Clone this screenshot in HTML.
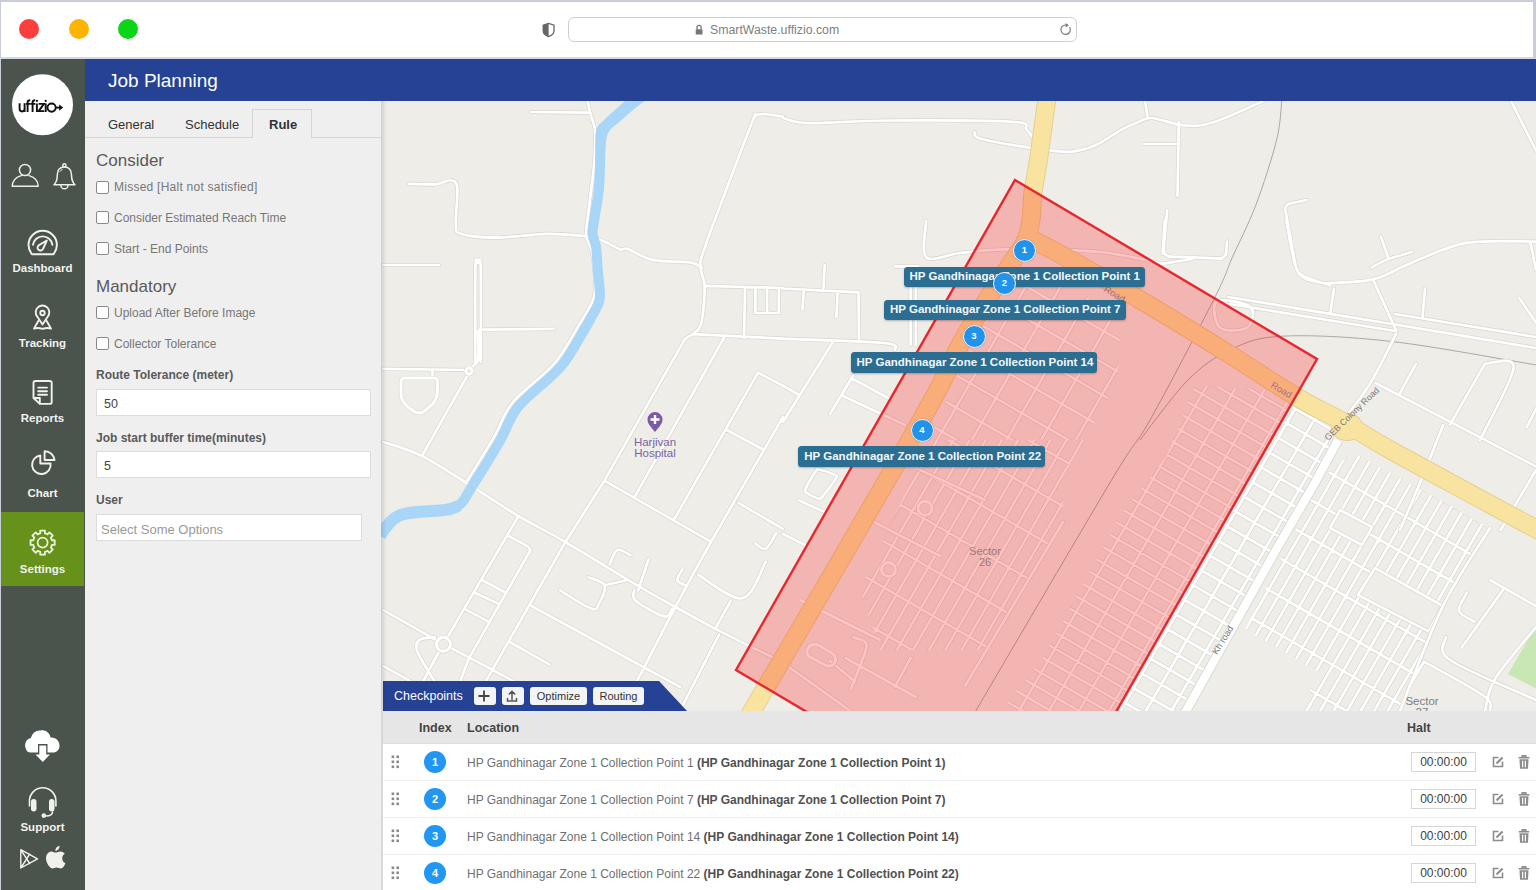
<!DOCTYPE html>
<html><head><meta charset="utf-8">
<style>
*{box-sizing:border-box;margin:0;padding:0}
html,body{width:1536px;height:890px;overflow:hidden;background:#fff;font-family:"Liberation Sans",sans-serif}
.abs{position:absolute}
#chrome{position:absolute;left:0;top:0;width:1536px;height:59px;background:#fff;border-top:2px solid #c9cdd9;border-left:1px solid #c9cdd9;border-right:3px solid #c9cdd9;border-bottom:2px solid #d3d9e6}
.tl{position:absolute;top:19px;width:20px;height:20px;border-radius:50%}
#url{position:absolute;left:568px;top:17px;width:509px;height:25px;border:1px solid #cfcfcf;border-radius:6px;background:#fff}
#urltext{position:absolute;left:710px;top:23px;font-size:12.3px;color:#808080}
#side{position:absolute;left:0;top:59px;width:85px;height:831px;background:#4b534d;border-left:1px solid #c9cdd9}
.nav{position:absolute;left:0;width:85px;text-align:center;color:#f2f2ee;font-size:11.5px;font-weight:bold}
#hdr{position:absolute;left:85px;top:59px;width:1451px;height:42px;background:#254294}
#hdr span{position:absolute;left:23px;top:11px;color:#fff;font-size:19px}
#panel{position:absolute;left:85px;top:101px;width:296px;height:789px;background:#efefef}
.tab{position:absolute;top:16px;font-size:13px;color:#333}
.cb{position:absolute;left:11px;width:13px;height:13px;border:1px solid #8a8a8a;border-radius:2px;background:#fff}
.cbl{position:absolute;left:29px;font-size:12px;color:#777}
.sec{position:absolute;left:11px;font-size:17px;color:#5a5a5a}
.lbl{position:absolute;left:11px;font-size:12px;color:#5a5a5a;font-weight:bold}
.inp{position:absolute;left:11px;width:275px;height:27px;background:#fff;border:1px solid #dcdcdc;font-size:12.5px;color:#444;padding:7px 0 0 7px}
#map{position:absolute;left:381px;top:101px;width:1155px;height:610px;background:#eeede8;overflow:hidden}
.th{position:absolute;top:10px;font-size:12.5px;font-weight:bold;color:#444}
.row{position:absolute;left:0;width:1153px;height:37px;border-bottom:1px solid #f0f0f0}
.num{position:absolute;left:41px;top:7px;width:22px;height:22px;border-radius:50%;background:#2196f3;color:#fff;font-size:11px;font-weight:bold;text-align:center;line-height:22px}
.loc{position:absolute;left:84px;top:12px;font-size:12px;color:#707070;white-space:nowrap}
.loc b{color:#505050}
.halt{position:absolute;left:1028px;top:8px;width:65px;height:20px;border:1px solid #d6d6d6;font-size:12px;color:#404040;text-align:center;line-height:19.5px}
.btn{position:absolute;top:687px;height:18px;background:#f4f4f4;border-radius:3px;overflow:hidden}
.mlb{position:absolute;height:20.7px;background:#2b6e92;border-radius:3.5px;color:#f4f8fb;font-size:11.5px;font-weight:bold;padding:3.8px 0 0 6px;white-space:nowrap;box-shadow:0 1px 2px rgba(0,0,0,0.25)}
.mk{position:absolute;width:23px;height:23px;border-radius:50%;background:#2292ea;border:1.5px solid #fff;color:#fff;font-size:9.5px;font-weight:bold;text-align:center;line-height:20px;box-shadow:0 0 1px rgba(0,0,0,0.3)}
#tbl{position:absolute;left:383px;top:711px;width:1153px;height:179px;background:#fff}
</style></head><body>
<div id="chrome">
</div>
<div class="tl" style="left:19px;background:#fc3f3c"></div>
<div class="tl" style="left:69px;background:#fdb400"></div>
<div class="tl" style="left:118px;background:#0bd615"></div>
<div id="url"></div>
<svg class="abs" style="left:535px;top:15px" width="40" height="30" viewBox="535 15 40 30"><path d="M548.6 23.4 L543.2 25.2 L543.2 31 Q543.2 34.6 548.6 36.6 Q554 34.6 554 31 L554 25.2 Z" fill="none" stroke="#666" stroke-width="1.3"/><path d="M548.6 23.4 L543.2 25.2 L543.2 31 Q543.2 34.6 548.6 36.6 Z" fill="#666"/></svg>
<svg class="abs" style="left:690px;top:20px" width="20" height="20" viewBox="690 20 20 20"><rect x="695.7" y="29.3" width="6.8" height="5.3" rx="0.6" fill="#777"/><path d="M697 29.5 V27.4 A2.1 2.1 0 0 1 701.2 27.4 V29.5" fill="none" stroke="#777" stroke-width="1.3"/></svg>
<svg class="abs" style="left:1055px;top:18px" width="22" height="22" viewBox="1055 18 22 22"><path d="M1069.6 27.2 A4.7 4.7 0 1 1 1066 25" fill="none" stroke="#777" stroke-width="1.2"/><path d="M1065.5 23 L1068.8 25.2 L1065.8 27.5 Z" fill="#777"/></svg>
<div id="urltext">SmartWaste.uffizio.com</div>

<div id="side"></div>
<div class="abs" style="left:1px;top:512px;width:83px;height:74px;background:#66911b"></div>
<svg class="abs" style="left:0;top:0" width="85" height="890" viewBox="0 0 85 890">
<circle cx="42.5" cy="104.7" r="30.5" fill="#fff"/>
<g fill="none" stroke="#efefe9" stroke-width="1.5" stroke-linecap="round" stroke-linejoin="round">
<circle cx="25" cy="170" r="5.6"/>
<path d="M21.2 175.6 C15 177.5 12.3 182 12.3 186.3 L38.2 186.3 C38.2 182 35.5 177.5 29 175.6"/>
<circle cx="64.4" cy="165.4" r="1.6"/>
<path d="M64.4 167 C59 167 57.4 171 57.3 175 C57.2 179 57.3 181.5 54 184.8 L75 184.8 C71.7 181.5 71.6 179 71.5 175 C71.4 171 69.8 167 64.4 167 Z"/>
<path d="M60.8 185.2 A3.6 3.6 0 0 0 68 185.2"/>
<path d="M60 171.5 A5 5 0 0 1 62.2 169.4" stroke-width="1"/>
</g>
<g fill="none" stroke="#f2f2ec" stroke-width="1.9" stroke-linecap="round" stroke-linejoin="round">
<path d="M31.8 254.2 C29.5 251 28.5 248 28.5 245 A14.2 14.2 0 0 1 56.9 245 C56.9 248 55.9 251 53.6 254.2 Z"/>
<path d="M33 244.8 A9.8 9.8 0 0 1 52.4 244.8"/>
<path d="M46.8 240.5 L43.2 248.5 A2.9 2.9 0 1 1 38.6 245.4 Z"/>
<path d="M42.5 324.6 L37.2 316.6 A6.8 6.8 0 1 1 47.8 316.6 Z"/>
<circle cx="42.5" cy="313" r="2.2"/>
<path d="M38.3 321 L34 328.6 C37 327.5 39.5 327.8 42.5 328.9 C45.5 327.8 48 327.5 51 328.6 L46.7 321"/>
<path d="M33.5 398 L33.5 383 A2 2 0 0 1 35.5 381 L49.7 381 A2 2 0 0 1 51.7 383 L51.7 401.9 A2 2 0 0 1 49.7 403.9 L39.8 403.9 Z M33.5 398 L39.8 398 L39.8 403.9"/>
<path d="M38.2 387.6 L47 387.6 M38.2 391.2 L47 391.2 M38.2 394.7 L47 394.7"/>
<path d="M40.3 455.5 A9.3 9.3 0 1 0 50.6 463.5 L40.3 463.5 Z"/>
<path d="M44.6 451.2 L44.6 460 L54.6 460 A10 10 0 0 0 44.6 451.2 Z"/>
</g>
<g fill="none" stroke="#eef5dc" stroke-width="1.8" stroke-linejoin="round">
<path d="M51.71 539.59 L51.91 540.28 L54.67 540.25 L54.67 544.95 L51.91 544.92 L51.18 546.91 L50.83 547.54 L52.80 549.48 L49.48 552.80 L47.54 550.83 L45.61 551.71 L44.92 551.91 L44.95 554.67 L40.25 554.67 L40.28 551.91 L38.29 551.18 L37.66 550.83 L35.72 552.80 L32.40 549.48 L34.37 547.54 L33.49 545.61 L33.29 544.92 L30.53 544.95 L30.53 540.25 L33.29 540.28 L34.02 538.29 L34.37 537.66 L32.40 535.72 L35.72 532.40 L37.66 534.37 L39.59 533.49 L40.28 533.29 L40.25 530.53 L44.95 530.53 L44.92 533.29 L46.91 534.02 L47.54 534.37 L49.48 532.40 L52.80 535.72 L50.83 537.66 Z"/>
<circle cx="42.6" cy="542.6" r="5"/>
</g>
<path fill="#fff" d="M26 749 C24 745 25.5 739 31 738 C32 733 36 730 40.5 730.5 C45 729 50 733 50.5 737.5 C56 737 60 741.5 59.5 746 C59.5 750 56.5 752.5 53 752.5 L47.5 752.5 L47.5 744 L38 744 L38 752.5 L30.5 752.5 C28 752.5 26.5 751 26 749 Z"/>
<path fill="#fff" d="M39.3 745.4 L46.2 745.4 L46.2 754.5 L50 754.5 L42.75 762 L35.5 754.5 L39.3 754.5 Z"/>
<g fill="none" stroke="#f2f2ec" stroke-width="1.6" stroke-linecap="round">
<path d="M29.5 806 L29.5 801 A13.2 13.2 0 0 1 55.9 801 L55.9 806"/>
<path d="M52.5 812 C52.5 815 50 816 45.5 816"/>
</g>
<rect x="31" y="799" width="5.5" height="12.5" rx="2.7" fill="#f2f2ec"/>
<rect x="49" y="799" width="5.5" height="12.5" rx="2.7" fill="#f2f2ec"/>
<circle cx="43.8" cy="815.6" r="2.3" fill="#f2f2ec"/>
<g fill="none" stroke="#f2f2ec" stroke-width="1.4" stroke-linejoin="round">
<path d="M20.8 849.6 L37.5 858.8 L20.8 868 Z M20.8 849.6 L30 864 M20.8 868 L30 853.6"/>
</g>
<path fill="#f2f2ec" d="M55 852.6 C57.5 852.6 58.5 851.4 60.5 851.4 C62.5 851.4 64 852.6 64.8 853.8 C62.6 855.2 62 857 62.3 859 C62.6 861.2 63.8 862.6 65.3 863.2 C64.6 865.5 62.8 868.4 60.8 868.4 C59 868.4 58.6 867.5 56.6 867.5 C54.6 867.5 54 868.5 52.4 868.5 C50 868.5 46 863 46 858.2 C46 854.6 48.5 851.5 51.5 851.5 C53 851.5 54 852.6 55 852.6 Z M55.3 851 C55.2 848.6 57 846.2 59.5 845.8 C59.8 848.2 57.8 850.8 55.3 851 Z"/>
</svg>
<div class="nav" style="top:262px">Dashboard</div>
<div class="nav" style="top:337px">Tracking</div>
<div class="nav" style="top:412px">Reports</div>
<div class="nav" style="top:487px">Chart</div>
<div class="nav" style="top:563px">Settings</div>
<div class="nav" style="top:821px">Support</div>
<svg class="abs" style="left:0;top:90px" width="85" height="30" viewBox="0 90 85 30"><g fill="none" stroke="#111" stroke-width="1.9" stroke-linecap="butt">
<path d="M19.6 103.3 V108.6 Q19.6 111.5 22.1 111.5 Q24.6 111.5 24.6 108.6 M24.6 103.3 V111.9"/>
<path d="M27.6 111.9 V102.6 Q27.6 100.3 30.2 100.3 M25.9 103.9 H30.6"/>
<path d="M32.6 111.9 V102.6 Q32.6 100.3 35.2 100.3 M30.6 103.9 H35.4"/>
<path d="M36.9 103.5 V111.9 M45.7 103.5 V111.9"/>
<path d="M38.6 103.9 H44 L38.6 111.1 H44.3"/>
<circle cx="51.6" cy="107.6" r="4.1"/>
<path d="M55.7 107.6 H60.5"/>
</g><circle cx="36.9" cy="100.9" r="1.05" fill="#111"/><circle cx="45.7" cy="100.9" r="1.05" fill="#111"/><path d="M59.2 104.4 L63.2 107.6 L59.2 110.8 Z" fill="#111"/></svg>
<div id="hdr"><span>Job Planning</span></div>
<div id="panel">
<div class="abs" style="left:0;top:36px;width:296px;height:1px;background:#d6d6d6"></div>
<div class="abs" style="left:167px;top:8px;width:60px;height:29px;background:#efefef;border:1px solid #d6d6d6;border-bottom:none"></div>
<div class="tab" style="left:23px;top:16px">General</div>
<div class="tab" style="left:100px;top:16px">Schedule</div>
<div class="tab" style="left:184px;top:16px;font-weight:bold;color:#333">Rule</div>
<div class="sec" style="top:50px">Consider</div>
<div class="cb" style="top:80px"></div><div class="cbl" style="top:79px;letter-spacing:0.25px">Missed [Halt not satisfied]</div>
<div class="cb" style="top:110px"></div><div class="cbl" style="top:110px">Consider Estimated Reach Time</div>
<div class="cb" style="top:141px"></div><div class="cbl" style="top:141px">Start - End Points</div>
<div class="sec" style="top:176px">Mandatory</div>
<div class="cb" style="top:205px"></div><div class="cbl" style="top:205px">Upload After Before Image</div>
<div class="cb" style="top:236px"></div><div class="cbl" style="top:236px">Collector Tolerance</div>
<div class="lbl" style="top:267px">Route Tolerance (meter)</div>
<div class="inp" style="top:288px">50</div>
<div class="lbl" style="top:330px">Job start buffer time(minutes)</div>
<div class="inp" style="top:350px">5</div>
<div class="lbl" style="top:392px">User</div>
<div class="inp" style="top:413px;width:266px;color:#999;font-size:13px;padding-left:4px">Select Some Options</div>
</div>
<div id="map"><svg class="abs" style="left:0;top:0" width="1155" height="610" viewBox="381 101 1155 610">
<defs>
<clipPath id="gc0"><path d="M1322.0 478.0 L1353.0 452.0 L1490.0 528.0 L1443.0 606.0 L1400.0 711.0 L1302.0 711.0 L1318.0 672.0 L1245.0 629.0 Z"/></clipPath>
<clipPath id="gc1"><path d="M1195.0 385.0 L1298.0 392.0 L1118.0 711.0 L1000.0 711.0 L1043.0 658.0 L1122.0 512.0 L1166.0 457.0 Z"/></clipPath>
<clipPath id="gc2"><path d="M1298.0 398.0 L1345.0 432.0 L1186.0 711.0 L1118.0 711.0 Z"/></clipPath>
<clipPath id="gc3"><path d="M997.0 300.0 L1060.0 268.0 L1120.0 330.0 L1118.0 380.0 L1085.0 440.0 L930.0 440.0 L955.0 380.0 Z"/></clipPath>
<clipPath id="gc4"><path d="M930.0 440.0 L1085.0 440.0 L1063.0 477.0 L1063.0 520.0 L990.0 650.0 L880.0 650.0 L860.0 590.0 Z"/></clipPath>
<clipPath id="polyc"><path d="M1015 180 L1317 359 L1038 849 L736 670 Z"/></clipPath>
</defs>
<rect x="381" y="101" width="1155" height="610" fill="#eeede8"/>
<path d="M1508 674 L1533 631 L1537 631 L1537 689 Z" fill="#c9e7b4"/>
<g clip-path="url(#gc0)"><path d="M1906.5 444.1 L1518.0 1117.0 M1896.4 438.2 L1507.9 1111.1 M1886.2 432.4 L1497.7 1105.3 M1876.1 426.5 L1487.6 1099.4 M1866.0 420.7 L1477.5 1093.6 M1855.8 414.8 L1467.3 1087.7 M1845.7 409.0 L1457.2 1081.9 M1835.6 403.1 L1447.1 1076.0 M1825.4 397.3 L1436.9 1070.2 M1815.3 391.4 L1426.8 1064.3 M1805.2 385.6 L1416.7 1058.5 M1795.0 379.7 L1406.5 1052.6 M1784.9 373.9 L1396.4 1046.8 M1774.8 368.0 L1386.3 1040.9 M1764.6 362.2 L1376.1 1035.1 M1754.5 356.3 L1366.0 1029.2 M1744.4 350.5 L1355.9 1023.4 M1734.2 344.6 L1345.7 1017.5 M1724.1 338.8 L1335.6 1011.7 M1714.0 332.9 L1325.5 1005.8 M1703.8 327.1 L1315.3 1000.0 M1693.7 321.2 L1305.2 994.1 M1683.6 315.4 L1295.1 988.3 M1673.4 309.5 L1284.9 982.4 M1663.3 303.7 L1274.8 976.6 M1653.2 297.8 L1264.7 970.7 M1643.1 292.0 L1254.6 964.9 M1632.9 286.1 L1244.4 959.0 M1622.8 280.3 L1234.3 953.2 M1612.7 274.4 L1224.2 947.3 M1602.5 268.6 L1214.0 941.5 M1592.4 262.7 L1203.9 935.6 M1582.3 256.9 L1193.8 929.8 M1572.1 251.0 L1183.6 923.9 M1562.0 245.2 L1173.5 918.1 M1551.9 239.3 L1163.4 912.2 M1541.7 233.5 L1153.2 906.4 M1531.6 227.6 L1143.1 900.5 M1521.5 221.8 L1133.0 894.7 M1511.3 215.9 L1122.8 888.8 M1501.2 210.1 L1112.7 883.0 M1491.1 204.2 L1102.6 877.1 M1480.9 198.4 L1092.4 871.3 M1470.8 192.5 L1082.3 865.4 M1460.7 186.7 L1072.2 859.6 M1450.5 180.8 L1062.0 853.7 M1440.4 175.0 L1051.9 847.9 M1430.3 169.1 L1041.8 842.0 M1420.1 163.3 L1031.6 836.2 M1410.0 157.4 L1021.5 830.3 M1399.9 151.6 L1011.4 824.5 M1389.7 145.7 L1001.2 818.6 M1379.6 139.9 L991.1 812.8 M1369.5 134.0 L981.0 806.9 M1359.3 128.2 L970.8 801.1 M1349.2 122.3 L960.7 795.2 M1339.1 116.5 L950.6 789.4 M1329.0 110.6 L940.5 783.5 M1318.8 104.8 L930.3 777.7 M1308.7 98.9 L920.2 771.8 M1298.6 93.1 L910.1 766.0 M1288.4 87.2 L899.9 760.1 M1278.3 81.4 L889.8 754.3 M1268.2 75.5 L879.7 748.4 M1258.0 69.7 L869.5 742.6 M1247.9 63.8 L859.4 736.7 M1237.8 58.0 L849.3 730.9 M1227.6 52.1 L839.1 725.0 M1217.5 46.3 L829.0 719.2 M1233.7 36.2 L1906.6 424.7 M1217.2 64.8 L1890.1 453.3 M1200.7 93.4 L1873.6 481.9 M1184.2 121.9 L1857.1 510.4 M1167.7 150.5 L1840.6 539.0 M1151.2 179.1 L1824.1 567.6 M1134.7 207.7 L1807.6 596.2 M1118.2 236.2 L1791.1 624.7 M1101.7 264.8 L1774.6 653.3 M1085.2 293.4 L1758.1 681.9 M1068.7 322.0 L1741.6 710.5 M1052.2 350.6 L1725.1 739.1 M1035.7 379.1 L1708.6 767.6 M1019.2 407.7 L1692.1 796.2 M1002.7 436.3 L1675.6 824.8 M986.2 464.9 L1659.1 853.4 M969.7 493.4 L1642.6 881.9 M953.2 522.0 L1626.1 910.5 M936.7 550.6 L1609.6 939.1 M920.2 579.2 L1593.1 967.7 M903.7 607.8 L1576.6 996.3 M887.2 636.3 L1560.1 1024.8 M870.7 664.9 L1543.6 1053.4 M854.2 693.5 L1527.1 1082.0 M837.7 722.1 L1510.6 1110.6 M821.2 750.7 L1494.1 1139.2" stroke="#d8d7d2" stroke-width="4.1" fill="none"/><path d="M1906.5 444.1 L1518.0 1117.0 M1896.4 438.2 L1507.9 1111.1 M1886.2 432.4 L1497.7 1105.3 M1876.1 426.5 L1487.6 1099.4 M1866.0 420.7 L1477.5 1093.6 M1855.8 414.8 L1467.3 1087.7 M1845.7 409.0 L1457.2 1081.9 M1835.6 403.1 L1447.1 1076.0 M1825.4 397.3 L1436.9 1070.2 M1815.3 391.4 L1426.8 1064.3 M1805.2 385.6 L1416.7 1058.5 M1795.0 379.7 L1406.5 1052.6 M1784.9 373.9 L1396.4 1046.8 M1774.8 368.0 L1386.3 1040.9 M1764.6 362.2 L1376.1 1035.1 M1754.5 356.3 L1366.0 1029.2 M1744.4 350.5 L1355.9 1023.4 M1734.2 344.6 L1345.7 1017.5 M1724.1 338.8 L1335.6 1011.7 M1714.0 332.9 L1325.5 1005.8 M1703.8 327.1 L1315.3 1000.0 M1693.7 321.2 L1305.2 994.1 M1683.6 315.4 L1295.1 988.3 M1673.4 309.5 L1284.9 982.4 M1663.3 303.7 L1274.8 976.6 M1653.2 297.8 L1264.7 970.7 M1643.1 292.0 L1254.6 964.9 M1632.9 286.1 L1244.4 959.0 M1622.8 280.3 L1234.3 953.2 M1612.7 274.4 L1224.2 947.3 M1602.5 268.6 L1214.0 941.5 M1592.4 262.7 L1203.9 935.6 M1582.3 256.9 L1193.8 929.8 M1572.1 251.0 L1183.6 923.9 M1562.0 245.2 L1173.5 918.1 M1551.9 239.3 L1163.4 912.2 M1541.7 233.5 L1153.2 906.4 M1531.6 227.6 L1143.1 900.5 M1521.5 221.8 L1133.0 894.7 M1511.3 215.9 L1122.8 888.8 M1501.2 210.1 L1112.7 883.0 M1491.1 204.2 L1102.6 877.1 M1480.9 198.4 L1092.4 871.3 M1470.8 192.5 L1082.3 865.4 M1460.7 186.7 L1072.2 859.6 M1450.5 180.8 L1062.0 853.7 M1440.4 175.0 L1051.9 847.9 M1430.3 169.1 L1041.8 842.0 M1420.1 163.3 L1031.6 836.2 M1410.0 157.4 L1021.5 830.3 M1399.9 151.6 L1011.4 824.5 M1389.7 145.7 L1001.2 818.6 M1379.6 139.9 L991.1 812.8 M1369.5 134.0 L981.0 806.9 M1359.3 128.2 L970.8 801.1 M1349.2 122.3 L960.7 795.2 M1339.1 116.5 L950.6 789.4 M1329.0 110.6 L940.5 783.5 M1318.8 104.8 L930.3 777.7 M1308.7 98.9 L920.2 771.8 M1298.6 93.1 L910.1 766.0 M1288.4 87.2 L899.9 760.1 M1278.3 81.4 L889.8 754.3 M1268.2 75.5 L879.7 748.4 M1258.0 69.7 L869.5 742.6 M1247.9 63.8 L859.4 736.7 M1237.8 58.0 L849.3 730.9 M1227.6 52.1 L839.1 725.0 M1217.5 46.3 L829.0 719.2 M1233.7 36.2 L1906.6 424.7 M1217.2 64.8 L1890.1 453.3 M1200.7 93.4 L1873.6 481.9 M1184.2 121.9 L1857.1 510.4 M1167.7 150.5 L1840.6 539.0 M1151.2 179.1 L1824.1 567.6 M1134.7 207.7 L1807.6 596.2 M1118.2 236.2 L1791.1 624.7 M1101.7 264.8 L1774.6 653.3 M1085.2 293.4 L1758.1 681.9 M1068.7 322.0 L1741.6 710.5 M1052.2 350.6 L1725.1 739.1 M1035.7 379.1 L1708.6 767.6 M1019.2 407.7 L1692.1 796.2 M1002.7 436.3 L1675.6 824.8 M986.2 464.9 L1659.1 853.4 M969.7 493.4 L1642.6 881.9 M953.2 522.0 L1626.1 910.5 M936.7 550.6 L1609.6 939.1 M920.2 579.2 L1593.1 967.7 M903.7 607.8 L1576.6 996.3 M887.2 636.3 L1560.1 1024.8 M870.7 664.9 L1543.6 1053.4 M854.2 693.5 L1527.1 1082.0 M837.7 722.1 L1510.6 1110.6 M821.2 750.7 L1494.1 1139.2" stroke="#fff" stroke-width="2.7" fill="none"/></g>
<g clip-path="url(#gc1)"><path d="M973.5 -125.9 L1820.4 363.1 M966.5 -113.8 L1813.4 375.2 M959.5 -101.7 L1806.4 387.3 M952.5 -89.6 L1799.4 399.4 M945.5 -77.4 L1792.4 411.6 M938.5 -65.3 L1785.4 423.7 M931.5 -53.2 L1778.4 435.8 M924.5 -41.1 L1771.4 447.9 M917.5 -28.9 L1764.4 460.1 M910.5 -16.8 L1757.4 472.2 M903.5 -4.7 L1750.4 484.3 M896.5 7.4 L1743.4 496.4 M889.5 19.6 L1736.4 508.6 M882.5 31.7 L1729.4 520.7 M875.5 43.8 L1722.4 532.8 M868.5 55.9 L1715.4 544.9 M861.5 68.1 L1708.4 557.1 M854.5 80.2 L1701.4 569.2 M847.5 92.3 L1694.4 581.3 M840.5 104.4 L1687.4 593.4 M833.5 116.6 L1680.4 605.6 M826.5 128.7 L1673.4 617.7 M819.5 140.8 L1666.4 629.8 M812.5 152.9 L1659.4 641.9 M805.5 165.1 L1652.4 654.1 M798.5 177.2 L1645.4 666.2 M791.5 189.3 L1638.4 678.3 M784.5 201.4 L1631.4 690.4 M777.5 213.5 L1624.4 702.5 M770.5 225.7 L1617.4 714.7 M763.5 237.8 L1610.4 726.8 M756.5 249.9 L1603.4 738.9 M749.5 262.0 L1596.4 751.0 M742.5 274.2 L1589.4 763.2 M735.5 286.3 L1582.4 775.3 M728.5 298.4 L1575.4 787.4 M721.5 310.5 L1568.4 799.5 M714.5 322.7 L1561.4 811.7 M707.5 334.8 L1554.4 823.8 M700.5 346.9 L1547.4 835.9 M693.5 359.0 L1540.4 848.0 M686.5 371.2 L1533.4 860.2 M679.5 383.3 L1526.4 872.3 M672.5 395.4 L1519.4 884.4 M665.5 407.5 L1512.4 896.5 M658.5 419.7 L1505.4 908.7 M651.5 431.8 L1498.4 920.8 M644.5 443.9 L1491.4 932.9 M637.5 456.0 L1484.4 945.0 M630.5 468.2 L1477.4 957.2 M623.5 480.3 L1470.4 969.3 M616.5 492.4 L1463.4 981.4 M609.5 504.5 L1456.4 993.5 M602.5 516.6 L1449.4 1005.6 M595.5 528.8 L1442.4 1017.8 M588.5 540.9 L1435.4 1029.9 M581.5 553.0 L1428.4 1042.0 M574.5 565.1 L1421.4 1054.1 M567.5 577.3 L1414.4 1066.3 M560.5 589.4 L1407.4 1078.4 M553.5 601.5 L1400.4 1090.5 M546.5 613.6 L1393.4 1102.6 M539.5 625.8 L1386.4 1114.8 M532.5 637.9 L1379.4 1126.9 M525.5 650.0 L1372.4 1139.0 M518.5 662.1 L1365.4 1151.1 M511.5 674.3 L1358.4 1163.3 M504.5 686.4 L1351.4 1175.4 M497.5 698.5 L1344.4 1187.5 M490.5 710.6 L1337.4 1199.6 M483.5 722.8 L1330.4 1211.8 M476.5 734.9 L1323.4 1223.9 M1839.4 382.0 L1350.4 1228.9 M1816.9 369.0 L1327.9 1215.9 M1794.4 356.0 L1305.4 1202.9 M1771.9 343.0 L1282.9 1189.9 M1749.3 330.0 L1260.3 1176.9 M1726.8 317.0 L1237.8 1163.9 M1704.3 304.0 L1215.3 1150.9 M1681.8 291.0 L1192.8 1137.9 M1659.3 278.0 L1170.3 1124.9 M1636.8 265.0 L1147.8 1111.9 M1614.2 252.0 L1125.2 1098.9 M1591.7 239.0 L1102.7 1085.9 M1569.2 226.0 L1080.2 1072.9 M1546.7 213.0 L1057.7 1059.9 M1524.2 200.0 L1035.2 1046.9 M1501.7 187.0 L1012.7 1033.9 M1479.1 174.0 L990.1 1020.9 M1456.6 161.0 L967.6 1007.9 M1434.1 148.0 L945.1 994.9 M1411.6 135.0 L922.6 981.9 M1389.1 122.0 L900.1 968.9 M1366.6 109.0 L877.6 955.9 M1344.1 96.0 L855.1 942.9 M1321.5 83.0 L832.5 929.9 M1299.0 70.0 L810.0 916.9 M1276.5 57.0 L787.5 903.9 M1254.0 44.0 L765.0 890.9 M1231.5 31.0 L742.5 877.9 M1209.0 18.0 L720.0 864.9 M1186.4 5.0 L697.4 851.9 M1163.9 -8.0 L674.9 838.9 M1141.4 -21.0 L652.4 825.9 M1118.9 -34.0 L629.9 812.9 M1096.4 -47.0 L607.4 799.9 M1073.9 -60.0 L584.9 786.9 M1051.3 -73.0 L562.3 773.9 M1028.8 -86.0 L539.8 760.9 M1006.3 -99.0 L517.3 747.9 M983.8 -112.0 L494.8 734.9 M961.3 -125.0 L472.3 721.9" stroke="#d8d7d2" stroke-width="3.9" fill="none"/><path d="M973.5 -125.9 L1820.4 363.1 M966.5 -113.8 L1813.4 375.2 M959.5 -101.7 L1806.4 387.3 M952.5 -89.6 L1799.4 399.4 M945.5 -77.4 L1792.4 411.6 M938.5 -65.3 L1785.4 423.7 M931.5 -53.2 L1778.4 435.8 M924.5 -41.1 L1771.4 447.9 M917.5 -28.9 L1764.4 460.1 M910.5 -16.8 L1757.4 472.2 M903.5 -4.7 L1750.4 484.3 M896.5 7.4 L1743.4 496.4 M889.5 19.6 L1736.4 508.6 M882.5 31.7 L1729.4 520.7 M875.5 43.8 L1722.4 532.8 M868.5 55.9 L1715.4 544.9 M861.5 68.1 L1708.4 557.1 M854.5 80.2 L1701.4 569.2 M847.5 92.3 L1694.4 581.3 M840.5 104.4 L1687.4 593.4 M833.5 116.6 L1680.4 605.6 M826.5 128.7 L1673.4 617.7 M819.5 140.8 L1666.4 629.8 M812.5 152.9 L1659.4 641.9 M805.5 165.1 L1652.4 654.1 M798.5 177.2 L1645.4 666.2 M791.5 189.3 L1638.4 678.3 M784.5 201.4 L1631.4 690.4 M777.5 213.5 L1624.4 702.5 M770.5 225.7 L1617.4 714.7 M763.5 237.8 L1610.4 726.8 M756.5 249.9 L1603.4 738.9 M749.5 262.0 L1596.4 751.0 M742.5 274.2 L1589.4 763.2 M735.5 286.3 L1582.4 775.3 M728.5 298.4 L1575.4 787.4 M721.5 310.5 L1568.4 799.5 M714.5 322.7 L1561.4 811.7 M707.5 334.8 L1554.4 823.8 M700.5 346.9 L1547.4 835.9 M693.5 359.0 L1540.4 848.0 M686.5 371.2 L1533.4 860.2 M679.5 383.3 L1526.4 872.3 M672.5 395.4 L1519.4 884.4 M665.5 407.5 L1512.4 896.5 M658.5 419.7 L1505.4 908.7 M651.5 431.8 L1498.4 920.8 M644.5 443.9 L1491.4 932.9 M637.5 456.0 L1484.4 945.0 M630.5 468.2 L1477.4 957.2 M623.5 480.3 L1470.4 969.3 M616.5 492.4 L1463.4 981.4 M609.5 504.5 L1456.4 993.5 M602.5 516.6 L1449.4 1005.6 M595.5 528.8 L1442.4 1017.8 M588.5 540.9 L1435.4 1029.9 M581.5 553.0 L1428.4 1042.0 M574.5 565.1 L1421.4 1054.1 M567.5 577.3 L1414.4 1066.3 M560.5 589.4 L1407.4 1078.4 M553.5 601.5 L1400.4 1090.5 M546.5 613.6 L1393.4 1102.6 M539.5 625.8 L1386.4 1114.8 M532.5 637.9 L1379.4 1126.9 M525.5 650.0 L1372.4 1139.0 M518.5 662.1 L1365.4 1151.1 M511.5 674.3 L1358.4 1163.3 M504.5 686.4 L1351.4 1175.4 M497.5 698.5 L1344.4 1187.5 M490.5 710.6 L1337.4 1199.6 M483.5 722.8 L1330.4 1211.8 M476.5 734.9 L1323.4 1223.9 M1839.4 382.0 L1350.4 1228.9 M1816.9 369.0 L1327.9 1215.9 M1794.4 356.0 L1305.4 1202.9 M1771.9 343.0 L1282.9 1189.9 M1749.3 330.0 L1260.3 1176.9 M1726.8 317.0 L1237.8 1163.9 M1704.3 304.0 L1215.3 1150.9 M1681.8 291.0 L1192.8 1137.9 M1659.3 278.0 L1170.3 1124.9 M1636.8 265.0 L1147.8 1111.9 M1614.2 252.0 L1125.2 1098.9 M1591.7 239.0 L1102.7 1085.9 M1569.2 226.0 L1080.2 1072.9 M1546.7 213.0 L1057.7 1059.9 M1524.2 200.0 L1035.2 1046.9 M1501.7 187.0 L1012.7 1033.9 M1479.1 174.0 L990.1 1020.9 M1456.6 161.0 L967.6 1007.9 M1434.1 148.0 L945.1 994.9 M1411.6 135.0 L922.6 981.9 M1389.1 122.0 L900.1 968.9 M1366.6 109.0 L877.6 955.9 M1344.1 96.0 L855.1 942.9 M1321.5 83.0 L832.5 929.9 M1299.0 70.0 L810.0 916.9 M1276.5 57.0 L787.5 903.9 M1254.0 44.0 L765.0 890.9 M1231.5 31.0 L742.5 877.9 M1209.0 18.0 L720.0 864.9 M1186.4 5.0 L697.4 851.9 M1163.9 -8.0 L674.9 838.9 M1141.4 -21.0 L652.4 825.9 M1118.9 -34.0 L629.9 812.9 M1096.4 -47.0 L607.4 799.9 M1073.9 -60.0 L584.9 786.9 M1051.3 -73.0 L562.3 773.9 M1028.8 -86.0 L539.8 760.9 M1006.3 -99.0 L517.3 747.9 M983.8 -112.0 L494.8 734.9 M961.3 -125.0 L472.3 721.9" stroke="#fff" stroke-width="2.5" fill="none"/></g>
<g clip-path="url(#gc2)"><path d="M1065.5 -97.0 L1878.7 372.5 M1057.0 -82.3 L1870.2 387.2 M1048.5 -67.6 L1861.7 401.9 M1040.0 -52.8 L1853.2 416.7 M1031.5 -38.1 L1844.7 431.4 M1023.0 -23.4 L1836.2 446.1 M1014.5 -8.7 L1827.7 460.8 M1006.0 6.0 L1819.2 475.5 M997.5 20.8 L1810.7 490.3 M989.0 35.5 L1802.2 505.0 M980.5 50.2 L1793.7 519.7 M972.0 64.9 L1785.2 534.4 M963.5 79.7 L1776.7 549.2 M955.0 94.4 L1768.2 563.9 M946.5 109.1 L1759.7 578.6 M938.0 123.8 L1751.2 593.3 M929.5 138.5 L1742.7 608.0 M921.0 153.3 L1734.2 622.8 M912.5 168.0 L1725.7 637.5 M904.0 182.7 L1717.2 652.2 M895.5 197.4 L1708.7 666.9 M887.0 212.1 L1700.2 681.6 M878.5 226.9 L1691.7 696.4 M870.0 241.6 L1683.2 711.1 M861.5 256.3 L1674.7 725.8 M853.0 271.0 L1666.2 740.5 M844.5 285.8 L1657.7 755.3 M836.0 300.5 L1649.2 770.0 M827.5 315.2 L1640.7 784.7 M819.0 329.9 L1632.2 799.4 M810.5 344.6 L1623.7 814.1 M802.0 359.4 L1615.2 828.9 M793.5 374.1 L1606.7 843.6 M785.0 388.8 L1598.2 858.3 M776.5 403.5 L1589.7 873.0 M768.0 418.3 L1581.2 887.8 M759.5 433.0 L1572.7 902.5 M751.0 447.7 L1564.2 917.2 M742.5 462.4 L1555.7 931.9 M734.0 477.1 L1547.2 946.6 M725.5 491.9 L1538.7 961.4 M717.0 506.6 L1530.2 976.1 M708.5 521.3 L1521.7 990.8 M700.0 536.0 L1513.2 1005.5 M691.5 550.8 L1504.7 1020.3 M683.0 565.5 L1496.2 1035.0 M674.5 580.2 L1487.7 1049.7 M666.0 594.9 L1479.2 1064.4 M657.5 609.6 L1470.7 1079.1 M649.0 624.4 L1462.2 1093.9 M640.5 639.1 L1453.7 1108.6 M632.0 653.8 L1445.2 1123.3 M623.5 668.5 L1436.7 1138.0 M615.0 683.3 L1428.2 1152.8 M606.5 698.0 L1419.7 1167.5 M598.0 712.7 L1411.2 1182.2 M589.5 727.4 L1402.7 1196.9 M1889.0 392.0 L1419.5 1205.2 M1870.0 381.0 L1400.5 1194.2 M1850.9 370.0 L1381.4 1183.2 M1831.9 359.0 L1362.4 1172.2 M1812.8 348.0 L1343.3 1161.2 M1793.8 337.0 L1324.3 1150.2 M1774.7 326.0 L1305.2 1139.2 M1755.7 315.0 L1286.2 1128.2 M1736.6 304.0 L1267.1 1117.2 M1717.6 293.0 L1248.1 1106.2 M1698.5 282.0 L1229.0 1095.2 M1679.5 271.0 L1210.0 1084.2 M1660.4 260.0 L1190.9 1073.2 M1641.4 249.0 L1171.9 1062.2 M1622.3 238.0 L1152.8 1051.2 M1603.3 227.0 L1133.8 1040.2 M1584.2 216.0 L1114.7 1029.2 M1565.1 205.0 L1095.6 1018.2 M1546.1 194.0 L1076.6 1007.2 M1527.0 183.0 L1057.5 996.2 M1508.0 172.0 L1038.5 985.2 M1488.9 161.0 L1019.4 974.2 M1469.9 150.0 L1000.4 963.2 M1450.8 139.0 L981.3 952.2 M1431.8 128.0 L962.3 941.2 M1412.7 117.0 L943.2 930.2 M1393.7 106.0 L924.2 919.2 M1374.6 95.0 L905.1 908.2 M1355.6 84.0 L886.1 897.2 M1336.5 73.0 L867.0 886.2 M1317.5 62.0 L848.0 875.2 M1298.4 51.0 L828.9 864.2 M1279.4 40.0 L809.9 853.2 M1260.3 29.0 L790.8 842.2 M1241.3 18.0 L771.8 831.2 M1222.2 7.0 L752.7 820.2 M1203.2 -4.0 L733.7 809.2 M1184.1 -15.0 L714.6 798.2 M1165.1 -26.0 L695.6 787.2 M1146.0 -37.0 L676.5 776.2 M1127.0 -48.0 L657.5 765.2 M1107.9 -59.0 L638.4 754.2 M1088.8 -70.0 L619.3 743.2 M1069.8 -81.0 L600.3 732.2 M1050.7 -92.0 L581.2 721.2" stroke="#d8d7d2" stroke-width="4.199999999999999" fill="none"/><path d="M1065.5 -97.0 L1878.7 372.5 M1057.0 -82.3 L1870.2 387.2 M1048.5 -67.6 L1861.7 401.9 M1040.0 -52.8 L1853.2 416.7 M1031.5 -38.1 L1844.7 431.4 M1023.0 -23.4 L1836.2 446.1 M1014.5 -8.7 L1827.7 460.8 M1006.0 6.0 L1819.2 475.5 M997.5 20.8 L1810.7 490.3 M989.0 35.5 L1802.2 505.0 M980.5 50.2 L1793.7 519.7 M972.0 64.9 L1785.2 534.4 M963.5 79.7 L1776.7 549.2 M955.0 94.4 L1768.2 563.9 M946.5 109.1 L1759.7 578.6 M938.0 123.8 L1751.2 593.3 M929.5 138.5 L1742.7 608.0 M921.0 153.3 L1734.2 622.8 M912.5 168.0 L1725.7 637.5 M904.0 182.7 L1717.2 652.2 M895.5 197.4 L1708.7 666.9 M887.0 212.1 L1700.2 681.6 M878.5 226.9 L1691.7 696.4 M870.0 241.6 L1683.2 711.1 M861.5 256.3 L1674.7 725.8 M853.0 271.0 L1666.2 740.5 M844.5 285.8 L1657.7 755.3 M836.0 300.5 L1649.2 770.0 M827.5 315.2 L1640.7 784.7 M819.0 329.9 L1632.2 799.4 M810.5 344.6 L1623.7 814.1 M802.0 359.4 L1615.2 828.9 M793.5 374.1 L1606.7 843.6 M785.0 388.8 L1598.2 858.3 M776.5 403.5 L1589.7 873.0 M768.0 418.3 L1581.2 887.8 M759.5 433.0 L1572.7 902.5 M751.0 447.7 L1564.2 917.2 M742.5 462.4 L1555.7 931.9 M734.0 477.1 L1547.2 946.6 M725.5 491.9 L1538.7 961.4 M717.0 506.6 L1530.2 976.1 M708.5 521.3 L1521.7 990.8 M700.0 536.0 L1513.2 1005.5 M691.5 550.8 L1504.7 1020.3 M683.0 565.5 L1496.2 1035.0 M674.5 580.2 L1487.7 1049.7 M666.0 594.9 L1479.2 1064.4 M657.5 609.6 L1470.7 1079.1 M649.0 624.4 L1462.2 1093.9 M640.5 639.1 L1453.7 1108.6 M632.0 653.8 L1445.2 1123.3 M623.5 668.5 L1436.7 1138.0 M615.0 683.3 L1428.2 1152.8 M606.5 698.0 L1419.7 1167.5 M598.0 712.7 L1411.2 1182.2 M589.5 727.4 L1402.7 1196.9 M1889.0 392.0 L1419.5 1205.2 M1870.0 381.0 L1400.5 1194.2 M1850.9 370.0 L1381.4 1183.2 M1831.9 359.0 L1362.4 1172.2 M1812.8 348.0 L1343.3 1161.2 M1793.8 337.0 L1324.3 1150.2 M1774.7 326.0 L1305.2 1139.2 M1755.7 315.0 L1286.2 1128.2 M1736.6 304.0 L1267.1 1117.2 M1717.6 293.0 L1248.1 1106.2 M1698.5 282.0 L1229.0 1095.2 M1679.5 271.0 L1210.0 1084.2 M1660.4 260.0 L1190.9 1073.2 M1641.4 249.0 L1171.9 1062.2 M1622.3 238.0 L1152.8 1051.2 M1603.3 227.0 L1133.8 1040.2 M1584.2 216.0 L1114.7 1029.2 M1565.1 205.0 L1095.6 1018.2 M1546.1 194.0 L1076.6 1007.2 M1527.0 183.0 L1057.5 996.2 M1508.0 172.0 L1038.5 985.2 M1488.9 161.0 L1019.4 974.2 M1469.9 150.0 L1000.4 963.2 M1450.8 139.0 L981.3 952.2 M1431.8 128.0 L962.3 941.2 M1412.7 117.0 L943.2 930.2 M1393.7 106.0 L924.2 919.2 M1374.6 95.0 L905.1 908.2 M1355.6 84.0 L886.1 897.2 M1336.5 73.0 L867.0 886.2 M1317.5 62.0 L848.0 875.2 M1298.4 51.0 L828.9 864.2 M1279.4 40.0 L809.9 853.2 M1260.3 29.0 L790.8 842.2 M1241.3 18.0 L771.8 831.2 M1222.2 7.0 L752.7 820.2 M1203.2 -4.0 L733.7 809.2 M1184.1 -15.0 L714.6 798.2 M1165.1 -26.0 L695.6 787.2 M1146.0 -37.0 L676.5 776.2 M1127.0 -48.0 L657.5 765.2 M1107.9 -59.0 L638.4 754.2 M1088.8 -70.0 L619.3 743.2 M1069.8 -81.0 L600.3 732.2 M1050.7 -92.0 L581.2 721.2" stroke="#fff" stroke-width="2.8" fill="none"/></g>
<g clip-path="url(#gc3)"><path d="M1424.7 255.7 L1139.7 749.3 M1398.7 240.7 L1113.7 734.3 M1372.7 225.7 L1087.7 719.3 M1346.8 210.7 L1061.8 704.3 M1320.8 195.7 L1035.8 689.3 M1294.8 180.7 L1009.8 674.3 M1268.8 165.7 L983.8 659.3 M1242.8 150.7 L957.8 644.3 M1216.9 135.7 L931.9 629.3 M1190.9 120.7 L905.9 614.3 M1164.9 105.7 L879.9 599.3 M1138.9 90.7 L853.9 584.3 M1112.9 75.7 L827.9 569.3 M1087.0 60.7 L802.0 554.3 M1061.0 45.7 L776.0 539.3 M1035.0 30.7 L750.0 524.3 M1009.0 15.7 L724.0 509.3 M983.0 0.7 L698.0 494.3 M957.1 -14.3 L672.1 479.3 M931.1 -29.3 L646.1 464.3 M905.1 -44.3 L620.1 449.3 M933.8 -58.0 L1427.4 227.0 M919.8 -33.7 L1413.4 251.3 M905.8 -9.5 L1399.4 275.5 M891.8 14.8 L1385.4 299.8 M877.8 39.0 L1371.4 324.0 M863.8 63.3 L1357.4 348.3 M849.8 87.5 L1343.4 372.5 M835.8 111.8 L1329.4 396.8 M821.8 136.0 L1315.4 421.0 M807.8 160.3 L1301.4 445.3 M793.8 184.5 L1287.4 469.5 M779.8 208.7 L1273.4 493.7 M765.8 233.0 L1259.4 518.0 M751.8 257.2 L1245.4 542.2 M737.8 281.5 L1231.4 566.5 M723.8 305.7 L1217.4 590.7 M709.8 330.0 L1203.4 615.0 M695.8 354.2 L1189.4 639.2 M681.8 378.5 L1175.4 663.5 M667.8 402.7 L1161.4 687.7 M653.8 427.0 L1147.4 712.0 M639.8 451.2 L1133.4 736.2 M625.8 475.5 L1119.4 760.5" stroke="#d8d7d2" stroke-width="3.9" fill="none"/><path d="M1424.7 255.7 L1139.7 749.3 M1398.7 240.7 L1113.7 734.3 M1372.7 225.7 L1087.7 719.3 M1346.8 210.7 L1061.8 704.3 M1320.8 195.7 L1035.8 689.3 M1294.8 180.7 L1009.8 674.3 M1268.8 165.7 L983.8 659.3 M1242.8 150.7 L957.8 644.3 M1216.9 135.7 L931.9 629.3 M1190.9 120.7 L905.9 614.3 M1164.9 105.7 L879.9 599.3 M1138.9 90.7 L853.9 584.3 M1112.9 75.7 L827.9 569.3 M1087.0 60.7 L802.0 554.3 M1061.0 45.7 L776.0 539.3 M1035.0 30.7 L750.0 524.3 M1009.0 15.7 L724.0 509.3 M983.0 0.7 L698.0 494.3 M957.1 -14.3 L672.1 479.3 M931.1 -29.3 L646.1 464.3 M905.1 -44.3 L620.1 449.3 M933.8 -58.0 L1427.4 227.0 M919.8 -33.7 L1413.4 251.3 M905.8 -9.5 L1399.4 275.5 M891.8 14.8 L1385.4 299.8 M877.8 39.0 L1371.4 324.0 M863.8 63.3 L1357.4 348.3 M849.8 87.5 L1343.4 372.5 M835.8 111.8 L1329.4 396.8 M821.8 136.0 L1315.4 421.0 M807.8 160.3 L1301.4 445.3 M793.8 184.5 L1287.4 469.5 M779.8 208.7 L1273.4 493.7 M765.8 233.0 L1259.4 518.0 M751.8 257.2 L1245.4 542.2 M737.8 281.5 L1231.4 566.5 M723.8 305.7 L1217.4 590.7 M709.8 330.0 L1203.4 615.0 M695.8 354.2 L1189.4 639.2 M681.8 378.5 L1175.4 663.5 M667.8 402.7 L1161.4 687.7 M653.8 427.0 L1147.4 712.0 M639.8 451.2 L1133.4 736.2 M625.8 475.5 L1119.4 760.5" stroke="#fff" stroke-width="2.5" fill="none"/></g>
<g clip-path="url(#gc4)"><path d="M1445.2 428.2 L1107.7 1012.7 M1433.1 421.2 L1095.6 1005.7 M1420.9 414.2 L1083.4 998.7 M1408.8 407.2 L1071.3 991.7 M1396.7 400.2 L1059.2 984.7 M1384.6 393.2 L1047.1 977.7 M1372.4 386.2 L1034.9 970.7 M1360.3 379.2 L1022.8 963.7 M1348.2 372.2 L1010.7 956.7 M1336.1 365.2 L998.6 949.7 M1323.9 358.2 L986.4 942.7 M1311.8 351.2 L974.3 935.7 M1299.7 344.2 L962.2 928.7 M1287.6 337.2 L950.1 921.7 M1275.4 330.2 L937.9 914.7 M1263.3 323.2 L925.8 907.7 M1251.2 316.2 L913.7 900.7 M1239.1 309.2 L901.6 893.7 M1226.9 302.2 L889.4 886.7 M1214.8 295.2 L877.3 879.7 M1202.7 288.2 L865.2 872.7 M1190.6 281.2 L853.1 865.7 M1178.5 274.2 L841.0 858.7 M1166.3 267.2 L828.8 851.7 M1154.2 260.2 L816.7 844.7 M1142.1 253.2 L804.6 837.7 M1130.0 246.2 L792.5 830.7 M1117.8 239.2 L780.3 823.7 M1105.7 232.2 L768.2 816.7 M1093.6 225.2 L756.1 809.7 M1081.5 218.2 L744.0 802.7 M1069.3 211.2 L731.8 795.7 M1057.2 204.2 L719.7 788.7 M1045.1 197.2 L707.6 781.7 M1033.0 190.2 L695.5 774.7 M1020.8 183.2 L683.3 767.7 M1008.7 176.2 L671.2 760.7 M996.6 169.2 L659.1 753.7 M984.5 162.2 L647.0 746.7 M972.3 155.2 L634.8 739.7 M960.2 148.2 L622.7 732.7 M948.1 141.2 L610.6 725.7 M936.0 134.2 L598.5 718.7 M923.8 127.2 L586.3 711.7 M911.7 120.2 L574.2 704.7 M899.6 113.2 L562.1 697.7 M887.5 106.2 L550.0 690.7 M875.4 99.2 L537.9 683.7 M863.2 92.2 L525.7 676.7 M851.1 85.2 L513.6 669.7 M839.0 78.2 L501.5 662.7 M859.6 65.5 L1444.2 403.0 M839.6 100.1 L1424.2 437.6 M819.6 134.8 L1404.2 472.3 M799.6 169.4 L1384.2 506.9 M779.6 204.1 L1364.2 541.6 M759.6 238.7 L1344.2 576.2 M739.6 273.3 L1324.2 610.8 M719.6 308.0 L1304.2 645.5 M699.6 342.6 L1284.2 680.1 M679.6 377.3 L1264.2 714.8 M659.6 411.9 L1244.2 749.4 M639.6 446.5 L1224.2 784.0 M619.6 481.2 L1204.2 818.7 M599.6 515.8 L1184.2 853.3 M579.6 550.5 L1164.2 888.0 M559.6 585.1 L1144.2 922.6 M539.6 619.7 L1124.2 957.2 M519.6 654.4 L1104.2 991.9 M499.6 689.0 L1084.2 1026.5" stroke="#d8d7d2" stroke-width="3.9" fill="none"/><path d="M1445.2 428.2 L1107.7 1012.7 M1433.1 421.2 L1095.6 1005.7 M1420.9 414.2 L1083.4 998.7 M1408.8 407.2 L1071.3 991.7 M1396.7 400.2 L1059.2 984.7 M1384.6 393.2 L1047.1 977.7 M1372.4 386.2 L1034.9 970.7 M1360.3 379.2 L1022.8 963.7 M1348.2 372.2 L1010.7 956.7 M1336.1 365.2 L998.6 949.7 M1323.9 358.2 L986.4 942.7 M1311.8 351.2 L974.3 935.7 M1299.7 344.2 L962.2 928.7 M1287.6 337.2 L950.1 921.7 M1275.4 330.2 L937.9 914.7 M1263.3 323.2 L925.8 907.7 M1251.2 316.2 L913.7 900.7 M1239.1 309.2 L901.6 893.7 M1226.9 302.2 L889.4 886.7 M1214.8 295.2 L877.3 879.7 M1202.7 288.2 L865.2 872.7 M1190.6 281.2 L853.1 865.7 M1178.5 274.2 L841.0 858.7 M1166.3 267.2 L828.8 851.7 M1154.2 260.2 L816.7 844.7 M1142.1 253.2 L804.6 837.7 M1130.0 246.2 L792.5 830.7 M1117.8 239.2 L780.3 823.7 M1105.7 232.2 L768.2 816.7 M1093.6 225.2 L756.1 809.7 M1081.5 218.2 L744.0 802.7 M1069.3 211.2 L731.8 795.7 M1057.2 204.2 L719.7 788.7 M1045.1 197.2 L707.6 781.7 M1033.0 190.2 L695.5 774.7 M1020.8 183.2 L683.3 767.7 M1008.7 176.2 L671.2 760.7 M996.6 169.2 L659.1 753.7 M984.5 162.2 L647.0 746.7 M972.3 155.2 L634.8 739.7 M960.2 148.2 L622.7 732.7 M948.1 141.2 L610.6 725.7 M936.0 134.2 L598.5 718.7 M923.8 127.2 L586.3 711.7 M911.7 120.2 L574.2 704.7 M899.6 113.2 L562.1 697.7 M887.5 106.2 L550.0 690.7 M875.4 99.2 L537.9 683.7 M863.2 92.2 L525.7 676.7 M851.1 85.2 L513.6 669.7 M839.0 78.2 L501.5 662.7 M859.6 65.5 L1444.2 403.0 M839.6 100.1 L1424.2 437.6 M819.6 134.8 L1404.2 472.3 M799.6 169.4 L1384.2 506.9 M779.6 204.1 L1364.2 541.6 M759.6 238.7 L1344.2 576.2 M739.6 273.3 L1324.2 610.8 M719.6 308.0 L1304.2 645.5 M699.6 342.6 L1284.2 680.1 M679.6 377.3 L1264.2 714.8 M659.6 411.9 L1244.2 749.4 M639.6 446.5 L1224.2 784.0 M619.6 481.2 L1204.2 818.7 M599.6 515.8 L1184.2 853.3 M579.6 550.5 L1164.2 888.0 M559.6 585.1 L1144.2 922.6 M539.6 619.7 L1124.2 957.2 M519.6 654.4 L1104.2 991.9 M499.6 689.0 L1084.2 1026.5" stroke="#fff" stroke-width="2.5" fill="none"/></g>
<path d="M1281.8 101.0 C1280.9 107.5 1280.9 122.6 1276.6 140.0 C1272.3 157.4 1263.2 185.7 1255.8 205.2 C1248.4 224.7 1239.4 241.6 1232.4 257.2 C1225.5 272.9 1227.8 271.8 1214.1 298.9 C1200.4 326.0 1167.2 389.6 1150.0 420.0 C1132.8 450.4 1140.0 432.5 1111.0 481.0 C1082.0 529.5 998.2 672.7 975.7 711.0" stroke="#a9a9a6" stroke-width="1" fill="none"/>
<path d="M1536.0 364.9 C1511.8 361.0 1433.4 346.2 1391.0 341.4 C1348.6 336.6 1308.6 334.8 1281.8 336.2 C1255.0 337.6 1245.6 342.7 1230.0 350.0 C1214.4 357.3 1203.0 365.0 1188.0 380.0 C1173.0 395.0 1148.0 430.0 1140.0 440.0" stroke="#a9a9a6" stroke-width="1" fill="none"/>
<path d="M1375 568 L1442.6 605.7 L1428.6 631.4 L1357.9 595 Z" fill="#eeede8" stroke="#d6d5d0" stroke-width="4.0" stroke-linejoin="round"/><path d="M1375 568 L1442.6 605.7 L1428.6 631.4 L1357.9 595 Z" fill="none" stroke="#fff" stroke-width="2.7" stroke-linejoin="round"/>
<path d="M1340 510 L1372 527 L1362 545 L1330 528 Z" fill="#eeede8" stroke="#d6d5d0" stroke-width="4.0" stroke-linejoin="round"/><path d="M1340 510 L1372 527 L1362 545 L1330 528 Z" fill="none" stroke="#fff" stroke-width="2.7" stroke-linejoin="round"/>
<path d="M531.0 112.0 L589.0 112.7 M587.4 101.0 C588.0 103.6 590.0 111.4 591.3 116.6 C592.6 121.8 594.8 123.8 595.2 132.0 C595.6 140.2 595.0 153.0 593.9 166.0 C592.8 179.0 590.0 198.5 588.7 210.0 C587.4 221.5 585.7 228.4 586.1 235.0 C586.5 241.6 589.9 243.5 591.3 249.4 C592.7 255.3 594.0 262.4 594.5 270.3 C595.0 278.2 596.8 287.5 594.0 297.0 C591.2 306.5 584.3 316.0 577.7 327.1 C571.1 338.2 565.1 351.0 554.3 363.6 C543.4 376.2 522.6 390.5 512.6 402.6 C502.6 414.8 502.2 423.1 494.4 436.5 C486.6 449.9 470.5 475.5 465.7 483.3 M409.0 183.8 C413.6 183.9 429.7 184.9 436.4 184.3 C443.1 183.7 445.9 180.0 449.4 180.4 C452.9 180.8 456.1 179.7 457.2 186.9 C458.3 194.1 455.2 215.6 455.9 223.4 C456.5 231.2 454.2 231.4 461.1 233.8 C468.1 236.2 483.3 237.7 497.6 237.7 C511.9 237.7 532.0 234.0 547.0 233.8 C562.0 233.6 577.8 235.1 587.4 236.4 C597.0 237.7 599.0 239.4 604.4 241.6 C609.8 243.8 616.1 248.2 620.0 249.4 C623.9 250.6 622.4 247.2 627.8 248.9 C633.2 250.7 642.1 257.6 652.5 259.9 C662.9 262.2 682.0 261.2 690.3 262.5 C698.5 263.8 700.0 266.8 702.0 267.7 M783.0 116.6 C780.0 116.2 769.2 114.5 765.0 114.2 C760.8 113.9 759.8 114.0 758.0 114.5 C756.2 115.0 755.7 115.8 754.5 117.5 C753.3 119.2 759.1 103.9 751.0 125.0 C742.9 146.1 714.3 220.4 705.9 244.2 C697.5 268.0 700.9 260.8 700.7 267.7 C700.5 274.6 704.4 277.2 704.6 285.9 C704.8 294.6 703.1 312.6 702.0 320.0 C700.9 327.4 698.7 328.3 698.0 330.0 M692.9 334.1 C707.9 334.9 751.1 337.1 783.0 338.6 C814.9 340.1 865.3 341.1 884.0 343.0 C902.7 344.9 893.2 348.8 895.0 350.0 M704.6 285.9 L783.0 288.0 M745.0 288.0 L744.0 338.0 M383.0 265.0 L439.0 265.0 M475.4 362.0 C475.4 346.3 475.0 284.5 475.4 268.0 C475.8 251.5 477.1 263.0 478.0 263.0 C478.9 263.0 480.2 251.5 480.7 268.0 C481.1 284.5 480.7 346.3 480.7 362.0 M479.4 329.6 L553.6 328.9 M383.0 368.8 L469.0 370.0 M478.0 331.0 C478.0 335.8 479.5 352.7 478.0 359.6 C476.5 366.6 478.3 356.6 469.0 372.7 C459.7 388.8 429.8 442.1 422.0 456.0 M383.0 441.7 C389.5 444.1 407.7 448.9 422.0 456.0 C436.3 463.1 452.9 474.6 469.0 484.6 C485.1 494.6 502.3 506.4 518.4 516.0 C534.4 525.6 546.6 531.1 565.3 542.0 C584.0 552.9 612.0 570.4 630.4 581.3 C648.8 592.2 661.6 599.3 675.9 607.3 C690.2 615.3 703.5 622.7 716.3 629.4 C729.1 636.1 741.7 642.1 752.8 647.7 C763.9 653.4 767.5 653.3 783.0 663.3 C798.5 673.3 834.0 699.3 845.5 707.6 C857.0 715.9 850.9 712.1 852.0 713.0 M432.5 370.0 L432.5 378.0 M724.1 337.5 L634.3 497.7 M604.4 480.7 L711.1 541.9 M783.0 417.0 C771.0 437.8 728.6 510.9 711.0 542.0 C693.4 573.1 689.0 581.4 677.3 603.4 C665.6 625.4 650.3 655.8 640.8 673.7 C631.2 691.6 623.5 704.8 620.0 711.0 M758.0 372.7 L674.7 518.5 M726.8 430.0 L763.2 449.5 M738.5 502.9 L783.0 528.9 M518.4 516.2 C505.9 537.6 459.1 617.0 443.4 644.3 C427.7 671.6 429.9 668.9 424.0 680.0 C418.1 691.1 410.7 705.8 408.0 711.0 M482.0 580.0 L504.0 591.7 M475.4 593.0 L497.6 603.4 M466.3 609.9 L488.5 621.6 M383.0 609.9 C391.8 614.9 425.9 634.3 436.0 640.0 C446.1 645.7 440.9 643.0 443.4 644.3 C445.9 645.6 443.3 644.0 451.0 648.0 C458.7 652.0 476.6 661.5 489.8 668.5 C503.0 675.5 523.3 686.4 530.0 690.0 M435.0 637.0 C432.4 637.5 422.5 637.7 419.5 639.9 C416.5 642.1 415.2 644.7 416.9 650.3 C418.6 655.9 426.0 667.1 429.9 673.7 C433.8 680.3 438.3 687.3 440.0 690.0 M383.0 665.9 C386.9 668.1 396.9 673.2 406.4 678.9 C415.9 684.6 434.4 696.5 440.0 700.0 M531.4 606.0 C550.5 616.4 621.2 655.0 646.0 668.5 C670.8 682.0 674.3 683.9 680.0 687.0 M510.6 642.5 L549.7 664.6 M755.4 543.5 C757.1 544.4 762.3 550.5 765.8 548.7 C769.3 547.0 774.5 535.6 776.2 533.0 M698.1 574.8 C705.5 578.7 731.1 600.4 742.4 598.2 C753.7 596.0 761.9 567.8 765.8 561.7 M730.7 600.8 L716.3 626.8 M719.0 634.6 L679.9 711.0 M609.6 564.3 C610.9 561.9 613.9 551.5 617.4 550.0 C620.9 548.5 628.2 554.3 630.4 555.2 M560.0 590.4 C565.2 593.4 584.8 606.4 591.3 608.6 C597.8 610.8 596.9 607.3 599.1 603.4 C601.3 599.5 606.1 589.5 604.4 585.2 C602.7 580.9 591.3 578.7 588.7 577.4 M604.4 585.2 L627.8 580.0 M648.6 559.1 L638.2 590.4 M634.3 590.4 C634.5 592.1 630.6 596.5 635.6 600.8 C640.6 605.1 658.2 615.1 664.2 616.4 C670.3 617.7 670.7 609.9 672.0 608.6 M682.5 569.5 C681.6 571.2 676.9 577.4 677.3 580.0 C677.7 582.6 683.8 584.3 685.1 585.2 M783.0 118.0 C787.3 118.8 791.6 122.7 809.0 123.1 C826.4 123.5 853.3 120.7 887.2 120.5 C921.1 120.3 989.0 120.3 1012.2 121.8 C1035.4 123.3 1022.5 126.2 1026.5 129.6 C1030.5 133.0 1034.4 139.9 1036.0 142.0 M974.4 132.2 C975.5 133.3 971.6 136.2 980.9 138.8 C990.2 141.4 1015.6 145.7 1030.4 147.9 C1045.2 150.1 1058.7 152.2 1069.5 151.8 C1080.3 151.4 1086.8 149.0 1095.5 145.3 C1104.2 141.6 1114.8 133.3 1121.5 129.6 C1128.2 125.9 1131.0 125.0 1136.0 123.1 C1141.0 121.2 1144.6 117.8 1151.6 118.0 C1158.5 118.2 1169.9 123.1 1177.7 124.4 C1185.5 125.7 1191.1 126.6 1198.5 125.7 C1205.9 124.8 1211.2 123.3 1222.0 119.2 C1232.8 115.1 1256.7 104.0 1263.6 101.0 M1145.0 101.0 L1147.6 116.6 M1143.7 144.0 L1179.0 144.0 M1178.8 121.8 L1177.5 196.0 M1162.0 263.8 L1192.0 259.0 M926.2 220.8 C926.2 226.9 920.6 251.9 926.2 257.2 C931.8 262.6 947.0 254.3 960.0 253.0 C973.0 251.7 981.1 249.6 1004.4 249.4 C1027.7 249.2 1073.7 249.6 1100.0 252.0 C1126.3 254.4 1151.7 261.8 1162.0 263.8 M824.7 265.0 L823.4 288.5 M803.8 291.0 L802.5 309.3 M837.7 292.4 L836.4 317.1 M895.0 266.4 L918.4 266.4 M910.6 283.0 L910.6 345.0 M915.8 283.0 L915.8 345.0 M832.5 342.7 L783.0 422.0 M853.3 375.3 L829.9 414.3 M843.0 396.0 L905.0 425.0 M851.6 378.2 L890.0 399.0 M798.6 500.3 L827.3 513.3 M818.6 469.5 C821.4 470.0 830.1 472.6 833.0 474.0 C835.9 475.4 837.8 474.2 836.0 478.0 C834.2 481.8 825.0 493.6 822.0 497.0 C819.0 500.4 820.5 499.2 818.0 498.5 C815.5 497.8 809.1 494.6 807.0 493.0 C804.9 491.4 804.0 492.7 805.5 489.0 C807.0 485.3 813.8 474.2 816.0 471.0 C818.2 467.8 815.8 469.0 818.6 469.5 M783.0 534.0 L809.0 547.0 M1323.5 283.3 C1331.8 282.6 1358.2 282.9 1373.0 279.4 C1387.8 275.9 1396.4 268.6 1412.0 262.5 C1427.6 256.4 1446.0 246.4 1466.7 242.9 C1487.4 239.4 1524.5 241.8 1536.0 241.6 M1371.7 267.7 C1374.1 266.4 1379.3 262.5 1386.0 259.9 C1392.7 257.3 1407.7 253.3 1412.0 252.0 M1380.8 236.4 L1388.6 258.6 M1373.0 279.4 L1396.4 331.0 M1511.0 101.0 L1536.0 150.5 M1530.5 243.0 L1536.0 270.0 M1334.0 288.5 L1330.0 314.5 M1425.0 288.5 L1422.5 317.0 M1518.8 297.6 L1536.0 322.4 M1228.0 297.0 C1255.3 301.5 1340.7 315.5 1392.0 324.0 C1443.3 332.5 1512.0 344.0 1536.0 348.0 M1230.0 304.0 L1395.0 331.0 M1395.0 314.0 L1536.0 337.0 M1216.7 301.5 C1221.8 298.1 1245.5 302.6 1250.6 307.0 C1255.6 311.4 1252.1 324.2 1247.0 327.6 C1241.9 331.0 1225.0 332.0 1220.0 327.6 C1215.0 323.2 1211.6 304.9 1216.7 301.5 M1164.8 220.0 L1162.6 253.7 M1286.2 220.0 C1287.7 227.5 1292.2 255.6 1295.2 265.0 C1298.2 274.4 1298.4 272.8 1304.2 276.2 C1310.0 279.6 1325.7 283.7 1330.0 285.2 M1344.0 419.5 C1348.4 413.4 1361.7 397.2 1370.4 383.0 C1379.1 368.8 1391.7 342.2 1396.0 334.0 M1375.6 383.0 L1536.0 466.4 M1416.0 363.6 L1399.0 394.8 M1485.0 363.6 C1489.8 364.2 1514.5 354.7 1513.6 367.5 C1512.7 380.3 1485.4 428.2 1479.8 440.4 M1485.0 363.6 L1449.8 424.8 M1443.3 424.8 C1439.8 433.4 1429.7 459.3 1422.5 476.8 C1415.3 494.3 1403.8 521.1 1400.0 530.0 M1536.0 409.0 L1526.6 427.4 M1490.0 528.0 C1482.2 541.0 1458.0 575.5 1443.0 606.0 C1428.0 636.5 1407.2 693.5 1400.0 711.0 M1424.0 661.6 C1434.0 667.3 1473.0 687.8 1484.0 696.0 C1495.0 704.2 1489.0 708.5 1490.0 711.0 M1424.0 661.6 L1409.0 687.0 M1490.0 580.0 L1536.0 606.0 M1503.0 590.0 L1461.5 647.7 M1446.0 637.0 C1446.7 640.8 1435.0 649.5 1450.0 660.0 C1465.0 670.5 1521.7 693.3 1536.0 700.0 M1536.0 627.0 C1529.2 635.7 1503.5 665.0 1495.0 679.0 C1486.5 693.0 1486.7 705.7 1485.0 711.0 M1466.7 593.0 C1465.4 596.0 1457.7 606.2 1459.0 611.0 C1460.3 615.8 1472.0 619.8 1474.6 621.6 M1536.0 470.0 L1500.6 530.0 M920.0 470.0 L985.0 500.0 M870.0 520.0 L940.0 556.0 M800.0 600.0 L880.0 640.0 M829.9 660.7 L854.6 681.5 M845.5 658.0 L915.8 697.0 M853.3 637.2 C855.5 638.3 865.0 639.5 866.3 643.8 C867.6 648.1 863.7 655.7 861.1 663.3 C858.5 670.9 852.4 685.0 850.7 689.3 M910.6 658.0 L895.0 686.7 M965.0 686.0 L1063.0 522.0 M698.0 330.0 L692.9 334.1 L685.0 338.8 L604.4 480.7 L565.3 542.2 L487.2 678.9 L470.0 711.0 M755.4 288.0 L755.4 313.0 L778.8 313.0 L778.8 288.0 M767.1 288.0 L767.1 313.0 M758.0 372.7 L783.0 385.7 L798.6 394.5 M508.0 535.7 L528.0 546.5 L530.5 550.0 L469.0 658.1 L461.1 678.9 L452.0 711.0 M1167.2 210.4 L1163.5 249.0 L1165.0 254.5 L1170.0 256.7 L1188.0 257.2 L1222.0 258.6 L1225.8 254.6 L1227.0 241.6 M783.0 288.5 L858.5 292.4 M858.5 292.4 L859.0 340.0 M1306.6 200.0 L1288.0 204.0 L1285.0 208.0 L1296.0 268.0 L1300.0 275.0 L1308.0 280.0 L1323.5 283.3" stroke="#d6d5d0" stroke-width="4.0" fill="none" stroke-linecap="round" stroke-linejoin="round"/>
<path d="M531.0 112.0 L589.0 112.7 M587.4 101.0 C588.0 103.6 590.0 111.4 591.3 116.6 C592.6 121.8 594.8 123.8 595.2 132.0 C595.6 140.2 595.0 153.0 593.9 166.0 C592.8 179.0 590.0 198.5 588.7 210.0 C587.4 221.5 585.7 228.4 586.1 235.0 C586.5 241.6 589.9 243.5 591.3 249.4 C592.7 255.3 594.0 262.4 594.5 270.3 C595.0 278.2 596.8 287.5 594.0 297.0 C591.2 306.5 584.3 316.0 577.7 327.1 C571.1 338.2 565.1 351.0 554.3 363.6 C543.4 376.2 522.6 390.5 512.6 402.6 C502.6 414.8 502.2 423.1 494.4 436.5 C486.6 449.9 470.5 475.5 465.7 483.3 M409.0 183.8 C413.6 183.9 429.7 184.9 436.4 184.3 C443.1 183.7 445.9 180.0 449.4 180.4 C452.9 180.8 456.1 179.7 457.2 186.9 C458.3 194.1 455.2 215.6 455.9 223.4 C456.5 231.2 454.2 231.4 461.1 233.8 C468.1 236.2 483.3 237.7 497.6 237.7 C511.9 237.7 532.0 234.0 547.0 233.8 C562.0 233.6 577.8 235.1 587.4 236.4 C597.0 237.7 599.0 239.4 604.4 241.6 C609.8 243.8 616.1 248.2 620.0 249.4 C623.9 250.6 622.4 247.2 627.8 248.9 C633.2 250.7 642.1 257.6 652.5 259.9 C662.9 262.2 682.0 261.2 690.3 262.5 C698.5 263.8 700.0 266.8 702.0 267.7 M783.0 116.6 C780.0 116.2 769.2 114.5 765.0 114.2 C760.8 113.9 759.8 114.0 758.0 114.5 C756.2 115.0 755.7 115.8 754.5 117.5 C753.3 119.2 759.1 103.9 751.0 125.0 C742.9 146.1 714.3 220.4 705.9 244.2 C697.5 268.0 700.9 260.8 700.7 267.7 C700.5 274.6 704.4 277.2 704.6 285.9 C704.8 294.6 703.1 312.6 702.0 320.0 C700.9 327.4 698.7 328.3 698.0 330.0 M692.9 334.1 C707.9 334.9 751.1 337.1 783.0 338.6 C814.9 340.1 865.3 341.1 884.0 343.0 C902.7 344.9 893.2 348.8 895.0 350.0 M704.6 285.9 L783.0 288.0 M745.0 288.0 L744.0 338.0 M383.0 265.0 L439.0 265.0 M475.4 362.0 C475.4 346.3 475.0 284.5 475.4 268.0 C475.8 251.5 477.1 263.0 478.0 263.0 C478.9 263.0 480.2 251.5 480.7 268.0 C481.1 284.5 480.7 346.3 480.7 362.0 M479.4 329.6 L553.6 328.9 M383.0 368.8 L469.0 370.0 M478.0 331.0 C478.0 335.8 479.5 352.7 478.0 359.6 C476.5 366.6 478.3 356.6 469.0 372.7 C459.7 388.8 429.8 442.1 422.0 456.0 M383.0 441.7 C389.5 444.1 407.7 448.9 422.0 456.0 C436.3 463.1 452.9 474.6 469.0 484.6 C485.1 494.6 502.3 506.4 518.4 516.0 C534.4 525.6 546.6 531.1 565.3 542.0 C584.0 552.9 612.0 570.4 630.4 581.3 C648.8 592.2 661.6 599.3 675.9 607.3 C690.2 615.3 703.5 622.7 716.3 629.4 C729.1 636.1 741.7 642.1 752.8 647.7 C763.9 653.4 767.5 653.3 783.0 663.3 C798.5 673.3 834.0 699.3 845.5 707.6 C857.0 715.9 850.9 712.1 852.0 713.0 M432.5 370.0 L432.5 378.0 M724.1 337.5 L634.3 497.7 M604.4 480.7 L711.1 541.9 M783.0 417.0 C771.0 437.8 728.6 510.9 711.0 542.0 C693.4 573.1 689.0 581.4 677.3 603.4 C665.6 625.4 650.3 655.8 640.8 673.7 C631.2 691.6 623.5 704.8 620.0 711.0 M758.0 372.7 L674.7 518.5 M726.8 430.0 L763.2 449.5 M738.5 502.9 L783.0 528.9 M518.4 516.2 C505.9 537.6 459.1 617.0 443.4 644.3 C427.7 671.6 429.9 668.9 424.0 680.0 C418.1 691.1 410.7 705.8 408.0 711.0 M482.0 580.0 L504.0 591.7 M475.4 593.0 L497.6 603.4 M466.3 609.9 L488.5 621.6 M383.0 609.9 C391.8 614.9 425.9 634.3 436.0 640.0 C446.1 645.7 440.9 643.0 443.4 644.3 C445.9 645.6 443.3 644.0 451.0 648.0 C458.7 652.0 476.6 661.5 489.8 668.5 C503.0 675.5 523.3 686.4 530.0 690.0 M435.0 637.0 C432.4 637.5 422.5 637.7 419.5 639.9 C416.5 642.1 415.2 644.7 416.9 650.3 C418.6 655.9 426.0 667.1 429.9 673.7 C433.8 680.3 438.3 687.3 440.0 690.0 M383.0 665.9 C386.9 668.1 396.9 673.2 406.4 678.9 C415.9 684.6 434.4 696.5 440.0 700.0 M531.4 606.0 C550.5 616.4 621.2 655.0 646.0 668.5 C670.8 682.0 674.3 683.9 680.0 687.0 M510.6 642.5 L549.7 664.6 M755.4 543.5 C757.1 544.4 762.3 550.5 765.8 548.7 C769.3 547.0 774.5 535.6 776.2 533.0 M698.1 574.8 C705.5 578.7 731.1 600.4 742.4 598.2 C753.7 596.0 761.9 567.8 765.8 561.7 M730.7 600.8 L716.3 626.8 M719.0 634.6 L679.9 711.0 M609.6 564.3 C610.9 561.9 613.9 551.5 617.4 550.0 C620.9 548.5 628.2 554.3 630.4 555.2 M560.0 590.4 C565.2 593.4 584.8 606.4 591.3 608.6 C597.8 610.8 596.9 607.3 599.1 603.4 C601.3 599.5 606.1 589.5 604.4 585.2 C602.7 580.9 591.3 578.7 588.7 577.4 M604.4 585.2 L627.8 580.0 M648.6 559.1 L638.2 590.4 M634.3 590.4 C634.5 592.1 630.6 596.5 635.6 600.8 C640.6 605.1 658.2 615.1 664.2 616.4 C670.3 617.7 670.7 609.9 672.0 608.6 M682.5 569.5 C681.6 571.2 676.9 577.4 677.3 580.0 C677.7 582.6 683.8 584.3 685.1 585.2 M783.0 118.0 C787.3 118.8 791.6 122.7 809.0 123.1 C826.4 123.5 853.3 120.7 887.2 120.5 C921.1 120.3 989.0 120.3 1012.2 121.8 C1035.4 123.3 1022.5 126.2 1026.5 129.6 C1030.5 133.0 1034.4 139.9 1036.0 142.0 M974.4 132.2 C975.5 133.3 971.6 136.2 980.9 138.8 C990.2 141.4 1015.6 145.7 1030.4 147.9 C1045.2 150.1 1058.7 152.2 1069.5 151.8 C1080.3 151.4 1086.8 149.0 1095.5 145.3 C1104.2 141.6 1114.8 133.3 1121.5 129.6 C1128.2 125.9 1131.0 125.0 1136.0 123.1 C1141.0 121.2 1144.6 117.8 1151.6 118.0 C1158.5 118.2 1169.9 123.1 1177.7 124.4 C1185.5 125.7 1191.1 126.6 1198.5 125.7 C1205.9 124.8 1211.2 123.3 1222.0 119.2 C1232.8 115.1 1256.7 104.0 1263.6 101.0 M1145.0 101.0 L1147.6 116.6 M1143.7 144.0 L1179.0 144.0 M1178.8 121.8 L1177.5 196.0 M1162.0 263.8 L1192.0 259.0 M926.2 220.8 C926.2 226.9 920.6 251.9 926.2 257.2 C931.8 262.6 947.0 254.3 960.0 253.0 C973.0 251.7 981.1 249.6 1004.4 249.4 C1027.7 249.2 1073.7 249.6 1100.0 252.0 C1126.3 254.4 1151.7 261.8 1162.0 263.8 M824.7 265.0 L823.4 288.5 M803.8 291.0 L802.5 309.3 M837.7 292.4 L836.4 317.1 M895.0 266.4 L918.4 266.4 M910.6 283.0 L910.6 345.0 M915.8 283.0 L915.8 345.0 M832.5 342.7 L783.0 422.0 M853.3 375.3 L829.9 414.3 M843.0 396.0 L905.0 425.0 M851.6 378.2 L890.0 399.0 M798.6 500.3 L827.3 513.3 M818.6 469.5 C821.4 470.0 830.1 472.6 833.0 474.0 C835.9 475.4 837.8 474.2 836.0 478.0 C834.2 481.8 825.0 493.6 822.0 497.0 C819.0 500.4 820.5 499.2 818.0 498.5 C815.5 497.8 809.1 494.6 807.0 493.0 C804.9 491.4 804.0 492.7 805.5 489.0 C807.0 485.3 813.8 474.2 816.0 471.0 C818.2 467.8 815.8 469.0 818.6 469.5 M783.0 534.0 L809.0 547.0 M1323.5 283.3 C1331.8 282.6 1358.2 282.9 1373.0 279.4 C1387.8 275.9 1396.4 268.6 1412.0 262.5 C1427.6 256.4 1446.0 246.4 1466.7 242.9 C1487.4 239.4 1524.5 241.8 1536.0 241.6 M1371.7 267.7 C1374.1 266.4 1379.3 262.5 1386.0 259.9 C1392.7 257.3 1407.7 253.3 1412.0 252.0 M1380.8 236.4 L1388.6 258.6 M1373.0 279.4 L1396.4 331.0 M1511.0 101.0 L1536.0 150.5 M1530.5 243.0 L1536.0 270.0 M1334.0 288.5 L1330.0 314.5 M1425.0 288.5 L1422.5 317.0 M1518.8 297.6 L1536.0 322.4 M1228.0 297.0 C1255.3 301.5 1340.7 315.5 1392.0 324.0 C1443.3 332.5 1512.0 344.0 1536.0 348.0 M1230.0 304.0 L1395.0 331.0 M1395.0 314.0 L1536.0 337.0 M1216.7 301.5 C1221.8 298.1 1245.5 302.6 1250.6 307.0 C1255.6 311.4 1252.1 324.2 1247.0 327.6 C1241.9 331.0 1225.0 332.0 1220.0 327.6 C1215.0 323.2 1211.6 304.9 1216.7 301.5 M1164.8 220.0 L1162.6 253.7 M1286.2 220.0 C1287.7 227.5 1292.2 255.6 1295.2 265.0 C1298.2 274.4 1298.4 272.8 1304.2 276.2 C1310.0 279.6 1325.7 283.7 1330.0 285.2 M1344.0 419.5 C1348.4 413.4 1361.7 397.2 1370.4 383.0 C1379.1 368.8 1391.7 342.2 1396.0 334.0 M1375.6 383.0 L1536.0 466.4 M1416.0 363.6 L1399.0 394.8 M1485.0 363.6 C1489.8 364.2 1514.5 354.7 1513.6 367.5 C1512.7 380.3 1485.4 428.2 1479.8 440.4 M1485.0 363.6 L1449.8 424.8 M1443.3 424.8 C1439.8 433.4 1429.7 459.3 1422.5 476.8 C1415.3 494.3 1403.8 521.1 1400.0 530.0 M1536.0 409.0 L1526.6 427.4 M1490.0 528.0 C1482.2 541.0 1458.0 575.5 1443.0 606.0 C1428.0 636.5 1407.2 693.5 1400.0 711.0 M1424.0 661.6 C1434.0 667.3 1473.0 687.8 1484.0 696.0 C1495.0 704.2 1489.0 708.5 1490.0 711.0 M1424.0 661.6 L1409.0 687.0 M1490.0 580.0 L1536.0 606.0 M1503.0 590.0 L1461.5 647.7 M1446.0 637.0 C1446.7 640.8 1435.0 649.5 1450.0 660.0 C1465.0 670.5 1521.7 693.3 1536.0 700.0 M1536.0 627.0 C1529.2 635.7 1503.5 665.0 1495.0 679.0 C1486.5 693.0 1486.7 705.7 1485.0 711.0 M1466.7 593.0 C1465.4 596.0 1457.7 606.2 1459.0 611.0 C1460.3 615.8 1472.0 619.8 1474.6 621.6 M1536.0 470.0 L1500.6 530.0 M920.0 470.0 L985.0 500.0 M870.0 520.0 L940.0 556.0 M800.0 600.0 L880.0 640.0 M829.9 660.7 L854.6 681.5 M845.5 658.0 L915.8 697.0 M853.3 637.2 C855.5 638.3 865.0 639.5 866.3 643.8 C867.6 648.1 863.7 655.7 861.1 663.3 C858.5 670.9 852.4 685.0 850.7 689.3 M910.6 658.0 L895.0 686.7 M965.0 686.0 L1063.0 522.0 M698.0 330.0 L692.9 334.1 L685.0 338.8 L604.4 480.7 L565.3 542.2 L487.2 678.9 L470.0 711.0 M755.4 288.0 L755.4 313.0 L778.8 313.0 L778.8 288.0 M767.1 288.0 L767.1 313.0 M758.0 372.7 L783.0 385.7 L798.6 394.5 M508.0 535.7 L528.0 546.5 L530.5 550.0 L469.0 658.1 L461.1 678.9 L452.0 711.0 M1167.2 210.4 L1163.5 249.0 L1165.0 254.5 L1170.0 256.7 L1188.0 257.2 L1222.0 258.6 L1225.8 254.6 L1227.0 241.6 M783.0 288.5 L858.5 292.4 M858.5 292.4 L859.0 340.0 M1306.6 200.0 L1288.0 204.0 L1285.0 208.0 L1296.0 268.0 L1300.0 275.0 L1308.0 280.0 L1323.5 283.3" stroke="#fff" stroke-width="2.7" fill="none" stroke-linecap="round" stroke-linejoin="round"/>
<circle cx="925" cy="508.3" r="7" fill="#eeede8" stroke="#d9d8d3" stroke-width="4.2"/><circle cx="925" cy="508.3" r="7" fill="none" stroke="#fff" stroke-width="3"/>
<circle cx="888.5" cy="569.5" r="7" fill="#eeede8" stroke="#d9d8d3" stroke-width="4.2"/><circle cx="888.5" cy="569.5" r="7" fill="none" stroke="#fff" stroke-width="3"/>
<circle cx="443.4" cy="644.3" r="7" fill="#eeede8" stroke="#d9d8d3" stroke-width="4.2"/><circle cx="443.4" cy="644.3" r="7" fill="none" stroke="#fff" stroke-width="3"/>
<circle cx="469" cy="371" r="3.2" fill="#eeede8" stroke="#d9d8d3" stroke-width="4.2"/><circle cx="469" cy="371" r="3.2" fill="none" stroke="#fff" stroke-width="3"/>
<path d="M405 378 L434 378 Q438 378 437.7 384 L437 395 Q436 402 428 408 L423 412 Q419 414 415 412 L408 407 Q401 401 401 394 L401 382 Q401 378 405 378 Z" fill="none" stroke="#d9d8d3" stroke-width="4.2"/><path d="M405 378 L434 378 Q438 378 437.7 384 L437 395 Q436 402 428 408 L423 412 Q419 414 415 412 L408 407 Q401 401 401 394 L401 382 Q401 378 405 378 Z" fill="none" stroke="#fff" stroke-width="3"/>
<path d="M808 648 Q812 642 820 646 L833 654 Q838 658 834 664 Q830 668 823 664 L810 657 Q805 653 808 648 Z" fill="none" stroke="#d9d8d3" stroke-width="4.2"/><path d="M808 648 Q812 642 820 646 L833 654 Q838 658 834 664 Q830 668 823 664 L810 657 Q805 653 808 648 Z" fill="none" stroke="#fff" stroke-width="3"/>
<path d="M1338.0 440.0 L1316.0 481.0 L1276.0 550.0 L1186.0 711.0 L1180.0 720.0" stroke="#d6d5d0" stroke-width="10" fill="none"/>
<path d="M1338.0 440.0 L1316.0 481.0 L1276.0 550.0 L1186.0 711.0 L1180.0 720.0" stroke="#fff" stroke-width="8.4" fill="none"/>
<path d="M637.0 99.0 C633.3 102.4 620.7 114.1 614.8 119.2 C608.9 124.3 604.1 124.8 601.7 129.6 C599.3 134.4 600.8 138.3 600.4 147.9 C600.0 157.5 600.1 175.2 599.1 186.9 C598.1 198.6 595.6 210.4 594.5 218.2 C593.4 226.0 592.4 229.0 592.6 233.8 C592.9 238.6 595.1 240.7 596.0 246.8 C596.9 252.9 597.2 261.6 597.8 270.3 C598.4 279.0 600.8 291.1 599.7 298.9 C598.6 306.7 594.0 311.8 591.3 317.1 C588.6 322.5 588.7 322.6 583.5 331.0 C578.3 339.4 571.0 354.9 560.1 367.5 C549.2 380.1 528.4 394.4 518.4 406.5 C508.4 418.6 508.0 426.9 500.2 440.4 C492.4 453.9 478.4 476.4 471.5 487.2 C464.6 498.1 464.6 501.6 458.5 505.5 C452.4 509.4 445.1 509.0 435.1 510.7 C425.1 512.4 407.6 512.0 398.6 515.9 C389.6 519.8 383.9 531.0 381.0 534.0" stroke="#a9d5f7" stroke-width="10" fill="none" stroke-linejoin="round" stroke-linecap="butt"/>
<path d="M626 100 C615 110 608 116 603 121 C598 126 595.5 132 595.3 150 L605.3 150 C605.8 136 608 131 613 127 C622 119 635 108 646 100 Z" fill="#a9d5f7"/>
<path d="M458.5 505.5 C450 511 440 510.5 435.1 510.7 C420 512 405 512 398.6 515.9 C392 519 386 526 380 536" stroke="#a9d5f7" stroke-width="12" fill="none" stroke-linecap="butt"/>
<path d="M1047.0 98.0 C1045.5 108.8 1040.3 147.3 1038.0 163.0 C1035.7 178.7 1034.2 182.5 1033.0 192.0 C1031.8 201.5 1032.2 212.0 1031.0 220.0 C1029.8 228.0 1029.2 233.0 1026.0 240.0 C1022.8 247.0 1018.0 252.8 1012.0 262.0 C1006.0 271.2 998.7 281.2 990.0 295.0 C981.3 308.8 968.5 329.5 960.0 345.0 C951.5 360.5 949.3 368.7 939.0 388.0 C928.7 407.3 914.5 432.2 898.0 461.0 C881.5 489.8 864.3 519.3 840.0 561.0 C815.7 602.7 767.8 683.7 752.0 711.0 C736.2 738.3 746.2 722.7 745.0 725.0 M1024.0 236.0 C1030.0 239.0 1040.3 243.2 1060.0 254.0 C1079.7 264.8 1115.2 285.2 1142.0 301.0 C1168.8 316.8 1194.7 332.7 1221.0 349.0 C1247.3 365.3 1280.3 387.2 1300.0 399.0 C1319.7 410.8 1322.9 410.4 1339.0 419.5 C1355.1 428.6 1363.6 435.1 1396.4 453.4 C1429.2 471.6 1508.7 514.2 1536.0 529.0 C1563.3 543.8 1556.0 539.8 1560.0 542.0" stroke="#e6cf8e" stroke-width="19" fill="none" stroke-linejoin="round"/>
<ellipse cx="1347" cy="427" rx="16" ry="14" fill="#e6cf8e"/>
<path d="M1047.0 98.0 C1045.5 108.8 1040.3 147.3 1038.0 163.0 C1035.7 178.7 1034.2 182.5 1033.0 192.0 C1031.8 201.5 1032.2 212.0 1031.0 220.0 C1029.8 228.0 1029.2 233.0 1026.0 240.0 C1022.8 247.0 1018.0 252.8 1012.0 262.0 C1006.0 271.2 998.7 281.2 990.0 295.0 C981.3 308.8 968.5 329.5 960.0 345.0 C951.5 360.5 949.3 368.7 939.0 388.0 C928.7 407.3 914.5 432.2 898.0 461.0 C881.5 489.8 864.3 519.3 840.0 561.0 C815.7 602.7 767.8 683.7 752.0 711.0 C736.2 738.3 746.2 722.7 745.0 725.0 M1024.0 236.0 C1030.0 239.0 1040.3 243.2 1060.0 254.0 C1079.7 264.8 1115.2 285.2 1142.0 301.0 C1168.8 316.8 1194.7 332.7 1221.0 349.0 C1247.3 365.3 1280.3 387.2 1300.0 399.0 C1319.7 410.8 1322.9 410.4 1339.0 419.5 C1355.1 428.6 1363.6 435.1 1396.4 453.4 C1429.2 471.6 1508.7 514.2 1536.0 529.0 C1563.3 543.8 1556.0 539.8 1560.0 542.0" stroke="#f8e4a0" stroke-width="17" fill="none" stroke-linejoin="round"/>
<ellipse cx="1347" cy="427" rx="15" ry="13" fill="#f8e4a0"/>
<path d="M1015 180 L1317 359 L1038 849 L736 670 Z" fill="rgba(255,0,0,0.235)" stroke="#e8262e" stroke-width="2.4" stroke-linejoin="miter"/>
<g font-family="Liberation Sans, sans-serif" text-anchor="middle">
<text x="985" y="555" font-size="11" fill="#a07878">Sector</text><text x="985" y="566" font-size="11" fill="#a07878">26</text>
<text x="1422" y="705" font-size="11.5" fill="#808080">Sector</text><text x="1422" y="716" font-size="11.5" fill="#808080">27</text>
<text x="655" y="446" font-size="11.5" fill="#7b64a3">Harjivan</text><text x="655" y="457" font-size="11.5" fill="#7b64a3">Hospital</text>
<text transform="translate(1103 291) rotate(31)" font-size="9.5" fill="#a0708a" text-anchor="start">Road</text>
<text transform="translate(1270 387) rotate(30)" font-size="9.5" fill="#a0708a" text-anchor="start">Road</text>
<text transform="translate(1328 441) rotate(-44)" font-size="8.8" fill="#777" text-anchor="start">GEB Colony Road</text>
<text transform="translate(1217 655) rotate(-58)" font-size="9" fill="#777" text-anchor="start">Kh road</text>
</g>
<path d="M655 432 C651 427 647.5 424 647.5 419.5 A7.5 7.5 0 0 1 662.5 419.5 C662.5 424 659 427 655 432 Z" fill="#7b5aa6"/>
<path d="M655 415 V424 M650.5 419.5 H659.5" stroke="#fff" stroke-width="2.4"/>
</svg></div>
<div class="mlb" style="left:903.5px;top:266.5px;width:241px">HP Gandhinagar Zone 1 Collection Point 1</div>
<div class="mk" style="left:1013px;top:239px">1</div>
<div class="mk" style="left:993px;top:272px">2</div>
<div class="mlb" style="left:884px;top:299.5px;width:241.5px">HP Gandhinagar Zone 1 Collection Point 7</div>
<div class="mk" style="left:962.5px;top:324.5px">3</div>
<div class="mlb" style="left:850.5px;top:352.3px;width:246px">HP Gandhinagar Zone 1 Collection Point 14</div>
<div class="mk" style="left:910.5px;top:419px">4</div>
<div class="mlb" style="left:798.3px;top:446.3px;width:247px">HP Gandhinagar Zone 1 Collection Point 22</div>

<svg class="abs" style="left:383px;top:681px" width="305" height="30"><path d="M0 0 L276 0 L304 30 L0 30 Z" fill="#254294"/></svg>
<div class="abs" style="left:394px;top:689px;font-size:12.5px;color:#fff">Checkpoints</div>
<div class="btn" style="left:474px;width:22px"><svg width="20" height="18" viewBox="0 0 20 18"><path d="M10 3.5 V14.5 M4.5 9 H15.5" stroke="#444" stroke-width="1.8"/></svg></div>
<div class="btn" style="left:502px;width:22px"><svg width="20" height="18" viewBox="0 0 20 18"><path d="M10 13 V4.5 M6.8 7.6 L10 4.3 L13.2 7.6 M5.5 11 V14 H14.5 V11" fill="none" stroke="#555" stroke-width="1.5"/></svg></div>
<div class="btn" style="left:530px;width:57px;font-size:11px;color:#333;text-align:center;line-height:18px">Optimize</div>
<div class="btn" style="left:593px;width:51px;font-size:11px;color:#333;text-align:center;line-height:18px">Routing</div>
<div class="abs" style="left:381px;top:101px;width:6px;height:610px;background:linear-gradient(to right,rgba(0,0,0,0.13),rgba(0,0,0,0.04) 60%,rgba(0,0,0,0))"></div>
<div class="abs" style="left:381px;top:711px;width:2px;height:179px;background:#d9d9d9"></div>
<div id="tbl">
<div class="abs" style="left:0;top:0;width:1153px;height:33px;background:#e6e6e6;border-bottom:1px solid #dedede"></div>
<div class="th" style="left:36px">Index</div>
<div class="th" style="left:84px">Location</div>
<div class="th" style="left:1024px">Halt</div>
<div class="row" style="top:33px">
<svg class="abs" style="left:8px;top:11px" width="10" height="14"><g fill="#8a8a8a"><rect x="0.6" y="0.5" width="2.6" height="2.6"/><rect x="5.4" y="0.5" width="2.6" height="2.6"/><rect x="0.6" y="5.5" width="2.6" height="2.6"/><rect x="5.4" y="5.5" width="2.6" height="2.6"/><rect x="0.6" y="10.5" width="2.6" height="2.6"/><rect x="5.4" y="10.5" width="2.6" height="2.6"/></g></svg>
<div class="num">1</div>
<div class="loc">HP Gandhinagar Zone 1 Collection Point 1 <b>(HP Gandhinagar Zone 1 Collection Point 1)</b></div>
<div class="halt">00:00:00</div>
<svg class="abs" style="left:1109px;top:12px" width="12" height="12" viewBox="0 0 12 12"><path d="M6.5 1.5 L1.5 1.5 L1.5 10.5 L10.5 10.5 L10.5 5.5" fill="none" stroke="#8c8c8c" stroke-width="1.6"/><path d="M4.5 7.5 L10.5 1.5" stroke="#8c8c8c" stroke-width="2.2"/></svg>
<svg class="abs" style="left:1135px;top:11px" width="12" height="15" viewBox="0 0 12 15"><path d="M0.6 2.8 L11.4 2.8 M3.8 2.4 L4.3 0.9 L7.7 0.9 L8.2 2.4" fill="none" stroke="#8c8c8c" stroke-width="1.6"/><path d="M1.5 4.3 L10.5 4.3 L10 13.8 L2 13.8 Z" fill="#8c8c8c"/><path d="M4.6 5.8 L4.6 12.3 M7.4 5.8 L7.4 12.3" stroke="#fff" stroke-width="1.2"/></svg>
</div><div class="row" style="top:70px">
<svg class="abs" style="left:8px;top:11px" width="10" height="14"><g fill="#8a8a8a"><rect x="0.6" y="0.5" width="2.6" height="2.6"/><rect x="5.4" y="0.5" width="2.6" height="2.6"/><rect x="0.6" y="5.5" width="2.6" height="2.6"/><rect x="5.4" y="5.5" width="2.6" height="2.6"/><rect x="0.6" y="10.5" width="2.6" height="2.6"/><rect x="5.4" y="10.5" width="2.6" height="2.6"/></g></svg>
<div class="num">2</div>
<div class="loc">HP Gandhinagar Zone 1 Collection Point 7 <b>(HP Gandhinagar Zone 1 Collection Point 7)</b></div>
<div class="halt">00:00:00</div>
<svg class="abs" style="left:1109px;top:12px" width="12" height="12" viewBox="0 0 12 12"><path d="M6.5 1.5 L1.5 1.5 L1.5 10.5 L10.5 10.5 L10.5 5.5" fill="none" stroke="#8c8c8c" stroke-width="1.6"/><path d="M4.5 7.5 L10.5 1.5" stroke="#8c8c8c" stroke-width="2.2"/></svg>
<svg class="abs" style="left:1135px;top:11px" width="12" height="15" viewBox="0 0 12 15"><path d="M0.6 2.8 L11.4 2.8 M3.8 2.4 L4.3 0.9 L7.7 0.9 L8.2 2.4" fill="none" stroke="#8c8c8c" stroke-width="1.6"/><path d="M1.5 4.3 L10.5 4.3 L10 13.8 L2 13.8 Z" fill="#8c8c8c"/><path d="M4.6 5.8 L4.6 12.3 M7.4 5.8 L7.4 12.3" stroke="#fff" stroke-width="1.2"/></svg>
</div><div class="row" style="top:107px">
<svg class="abs" style="left:8px;top:11px" width="10" height="14"><g fill="#8a8a8a"><rect x="0.6" y="0.5" width="2.6" height="2.6"/><rect x="5.4" y="0.5" width="2.6" height="2.6"/><rect x="0.6" y="5.5" width="2.6" height="2.6"/><rect x="5.4" y="5.5" width="2.6" height="2.6"/><rect x="0.6" y="10.5" width="2.6" height="2.6"/><rect x="5.4" y="10.5" width="2.6" height="2.6"/></g></svg>
<div class="num">3</div>
<div class="loc">HP Gandhinagar Zone 1 Collection Point 14 <b>(HP Gandhinagar Zone 1 Collection Point 14)</b></div>
<div class="halt">00:00:00</div>
<svg class="abs" style="left:1109px;top:12px" width="12" height="12" viewBox="0 0 12 12"><path d="M6.5 1.5 L1.5 1.5 L1.5 10.5 L10.5 10.5 L10.5 5.5" fill="none" stroke="#8c8c8c" stroke-width="1.6"/><path d="M4.5 7.5 L10.5 1.5" stroke="#8c8c8c" stroke-width="2.2"/></svg>
<svg class="abs" style="left:1135px;top:11px" width="12" height="15" viewBox="0 0 12 15"><path d="M0.6 2.8 L11.4 2.8 M3.8 2.4 L4.3 0.9 L7.7 0.9 L8.2 2.4" fill="none" stroke="#8c8c8c" stroke-width="1.6"/><path d="M1.5 4.3 L10.5 4.3 L10 13.8 L2 13.8 Z" fill="#8c8c8c"/><path d="M4.6 5.8 L4.6 12.3 M7.4 5.8 L7.4 12.3" stroke="#fff" stroke-width="1.2"/></svg>
</div><div class="row" style="top:144px">
<svg class="abs" style="left:8px;top:11px" width="10" height="14"><g fill="#8a8a8a"><rect x="0.6" y="0.5" width="2.6" height="2.6"/><rect x="5.4" y="0.5" width="2.6" height="2.6"/><rect x="0.6" y="5.5" width="2.6" height="2.6"/><rect x="5.4" y="5.5" width="2.6" height="2.6"/><rect x="0.6" y="10.5" width="2.6" height="2.6"/><rect x="5.4" y="10.5" width="2.6" height="2.6"/></g></svg>
<div class="num">4</div>
<div class="loc">HP Gandhinagar Zone 1 Collection Point 22 <b>(HP Gandhinagar Zone 1 Collection Point 22)</b></div>
<div class="halt">00:00:00</div>
<svg class="abs" style="left:1109px;top:12px" width="12" height="12" viewBox="0 0 12 12"><path d="M6.5 1.5 L1.5 1.5 L1.5 10.5 L10.5 10.5 L10.5 5.5" fill="none" stroke="#8c8c8c" stroke-width="1.6"/><path d="M4.5 7.5 L10.5 1.5" stroke="#8c8c8c" stroke-width="2.2"/></svg>
<svg class="abs" style="left:1135px;top:11px" width="12" height="15" viewBox="0 0 12 15"><path d="M0.6 2.8 L11.4 2.8 M3.8 2.4 L4.3 0.9 L7.7 0.9 L8.2 2.4" fill="none" stroke="#8c8c8c" stroke-width="1.6"/><path d="M1.5 4.3 L10.5 4.3 L10 13.8 L2 13.8 Z" fill="#8c8c8c"/><path d="M4.6 5.8 L4.6 12.3 M7.4 5.8 L7.4 12.3" stroke="#fff" stroke-width="1.2"/></svg>
</div>
</div>
</body></html>
